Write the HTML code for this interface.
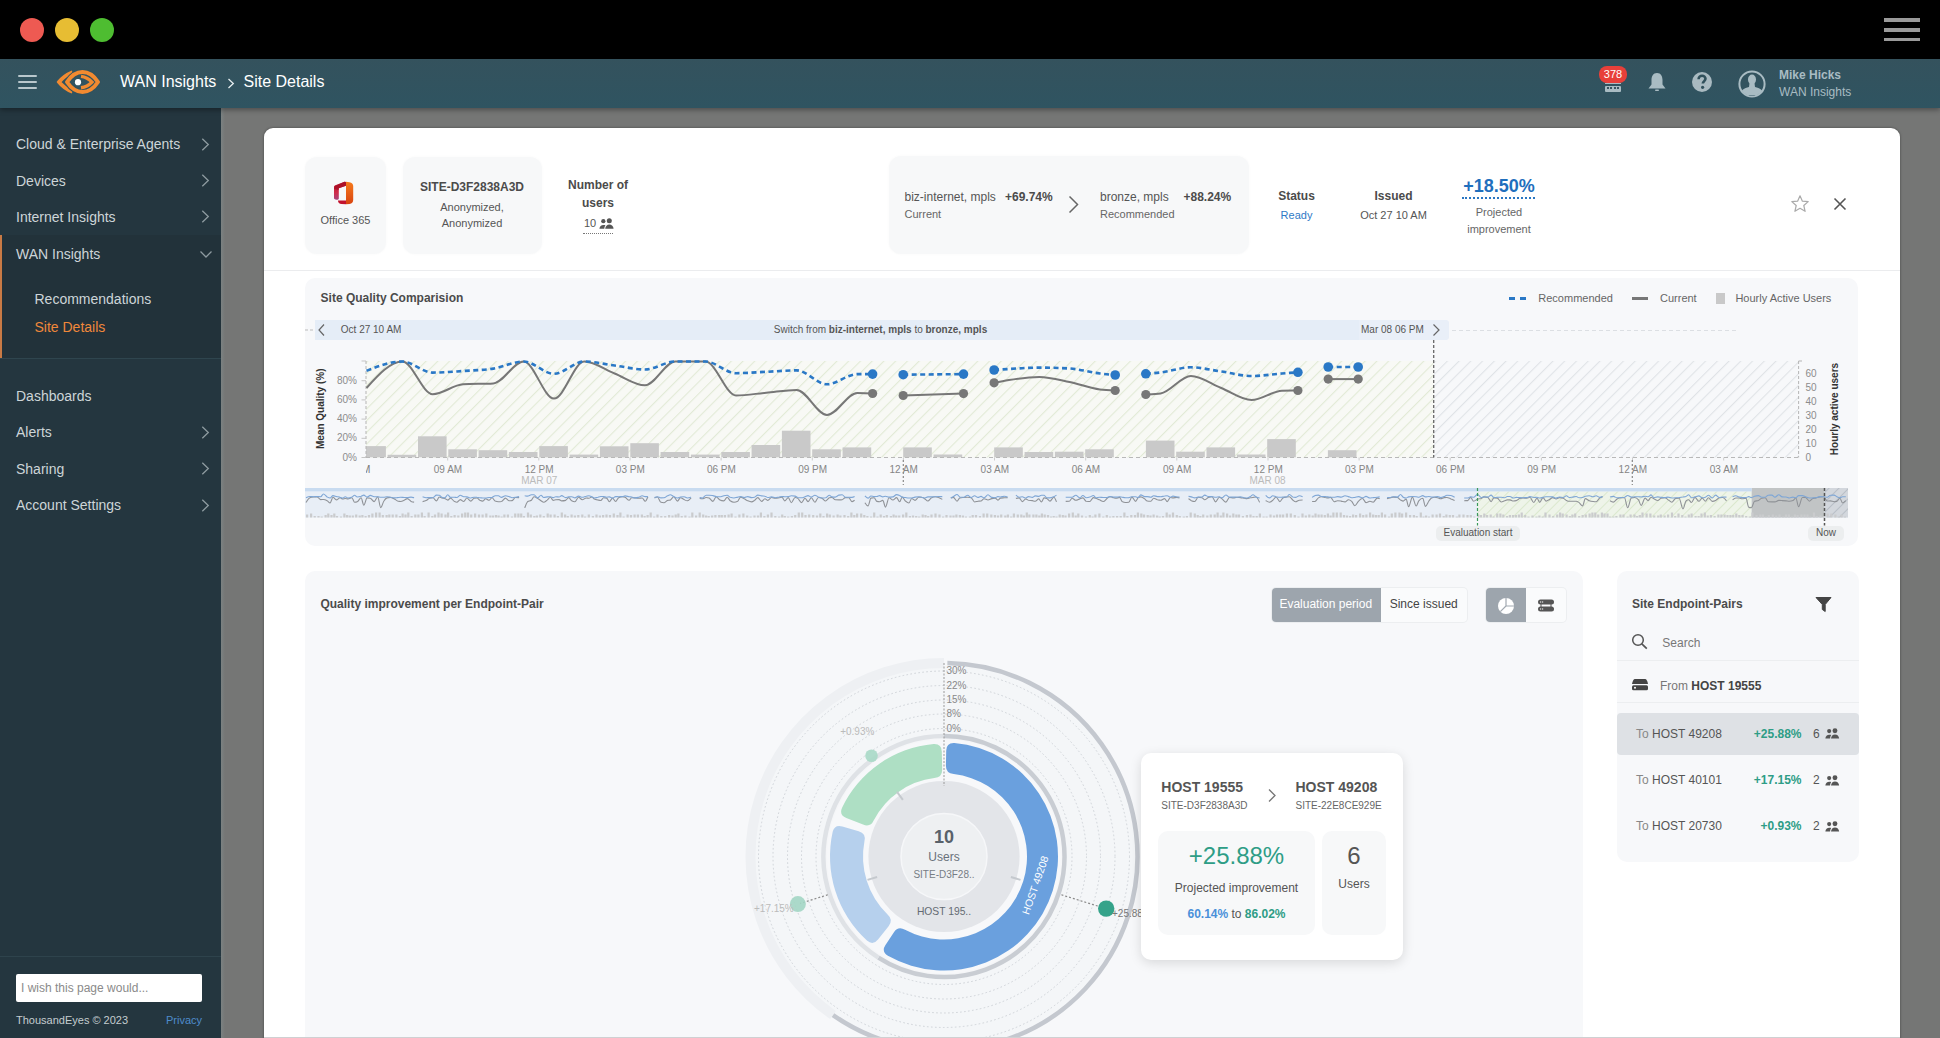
<!DOCTYPE html>
<html><head><meta charset="utf-8"><title>Site Details</title>
<style>
*{box-sizing:border-box;margin:0;padding:0}
html,body{width:1940px;height:1038px;overflow:hidden;background:#767676;font-family:"Liberation Sans",sans-serif}
.abs{position:absolute}
.t{position:absolute;white-space:nowrap}
svg{position:absolute;overflow:visible}
</style></head>
<body>
<div class="abs" style="left:0px;top:0px;width:1940px;height:59px;background:#000;"></div>
<div class="abs" style="left:20px;top:18px;width:24px;height:24px;background:#ee5a52;border-radius:50%;"></div>
<div class="abs" style="left:55px;top:18px;width:24px;height:24px;background:#e7bd33;border-radius:50%;"></div>
<div class="abs" style="left:90px;top:18px;width:24px;height:24px;background:#4ebd31;border-radius:50%;"></div>
<div class="abs" style="left:1884px;top:18.3px;width:36px;height:3.7px;background:#9a9a9a;"></div>
<div class="abs" style="left:1884px;top:28px;width:36px;height:3.7px;background:#9a9a9a;"></div>
<div class="abs" style="left:1884px;top:37.8px;width:36px;height:3.7px;background:#9a9a9a;"></div>
<div class="abs" style="left:0px;top:59px;width:1940px;height:49px;background:linear-gradient(#34525d,#2f5461);box-shadow:0 2px 5px rgba(0,0,0,.35);z-index:3;"></div>
<div class="abs" style="left:0;top:59px;width:1940px;height:49px;z-index:4">
<div class="abs" style="left:18px;top:16px;width:19px;height:2.4px;background:#b9c7cc;border-radius:1px;"></div>
<div class="abs" style="left:18px;top:22px;width:19px;height:2.4px;background:#b9c7cc;border-radius:1px;"></div>
<div class="abs" style="left:18px;top:28px;width:19px;height:2.4px;background:#b9c7cc;border-radius:1px;"></div>
<svg style="left:54px;top:8px" width="50" height="32" viewBox="0 0 50 32">
<path d="M18.5,5.2 C13,7.5 8.5,10.5 5,15 C8.5,19.5 13,22.5 18.5,24.8" fill="none" stroke="#f28a30" stroke-width="3.8" stroke-linecap="butt"/>
<path d="M13,15 C18,7.5 23.5,5 28.5,5 C33.5,5 39,7.5 44,15 C39,22.5 33.5,25 28.5,25 C23.5,25 18,22.5 13,15 Z" fill="none" stroke="#31525e" stroke-width="6" stroke-linejoin="round"/>
<path d="M13,15 C18,7.5 23.5,5 28.5,5 C33.5,5 39,7.5 44,15 C39,22.5 33.5,25 28.5,25 C23.5,25 18,22.5 13,15 Z" fill="none" stroke="#f28a30" stroke-width="4" stroke-linejoin="round"/>
<path d="M27,9.4 C31.5,10 35,12 38,15.1 C35,18.2 31.5,20.2 27,20.8" fill="none" stroke="#f28a30" stroke-width="3.4" stroke-linecap="butt"/>
<circle cx="24" cy="15.2" r="3.1" fill="#fff"/>
</svg>
<div class="t" style="left:120.0px;top:14.8px;font-size:16px;line-height:16px;color:#fff;">WAN Insights</div>
<svg style="left:227px;top:18.5px" width="9" height="11" viewBox="0 0 9 11"><path d="M1.5,1 L6.3,5.5 L1.5,10" fill="none" stroke="#e6eef0" stroke-width="1.3"/></svg>
<div class="t" style="left:243.5px;top:14.8px;font-size:16px;line-height:16px;color:#fff;">Site Details</div>
<div class="abs" style="left:1599px;top:7px;width:28px;height:16.5px;background:#e8403a;border-radius:8px;"></div>
<div class="t" style="left:1213.0px;width:800px;text-align:center;top:10.2px;font-size:11px;line-height:11px;color:#fff;">378</div>
<div class="abs" style="left:1605px;top:23.5px;width:16px;height:1px;background:#a9bcc3;"></div>
<div class="abs" style="left:1605px;top:26.5px;width:16px;height:6px;background:#a9bcc3;border-radius:1px;"></div>
<div class="abs" style="left:1607px;top:28px;width:12px;height:2px;border-top:2px dotted #3a5560"></div>
<svg style="left:1647px;top:13px" width="20" height="20" viewBox="0 0 20 20">
<path d="M10,1 C6,1 4.5,4.5 4.5,8 L4.5,12.5 L1.5,16.5 L18.5,16.5 L15.5,12.5 L15.5,8 C15.5,4.5 14,1 10,1 Z" fill="#a9bcc3"/>
<rect x="8" y="17.5" width="4" height="1.6" rx="0.8" fill="#a9bcc3"/>
</svg>
<svg style="left:1691px;top:12px" width="22" height="22" viewBox="0 0 22 22">
<circle cx="11" cy="11" r="10" fill="#a9bac1"/>
<path d="M7.6,8.2 C7.6,5.9 9.2,4.8 11.1,4.8 C13.1,4.8 14.5,6 14.5,7.8 C14.5,9.9 11.8,10.3 11.8,12.6" fill="none" stroke="#30505b" stroke-width="2.6"/>
<circle cx="11.6" cy="16.3" r="1.6" fill="#30505b"/>
</svg>
<svg style="left:1737px;top:10px" width="30" height="30" viewBox="0 0 30 30">
<defs><clipPath id="avc"><circle cx="15" cy="15" r="12"/></clipPath></defs>
<circle cx="15" cy="15" r="12.6" fill="none" stroke="#a9bcc3" stroke-width="2"/>
<g clip-path="url(#avc)" fill="#a9bcc3"><ellipse cx="15" cy="10.5" rx="4" ry="5"/><path d="M12.5,14 L17.5,14 L18,18 C23,19 26,21 27,26 L3,26 C4,21 7,19 12,18 Z"/></g>
</svg>
<div class="t" style="left:1779.0px;top:9.8px;font-size:12px;line-height:12px;color:#a9bcc3;font-weight:700;">Mike Hicks</div>
<div class="t" style="left:1779.0px;top:26.8px;font-size:12px;line-height:12px;color:#a9bcc3;">WAN Insights</div>
</div>
<div class="abs" style="left:0px;top:108px;width:221px;height:930px;background:#24363f;"></div>
<div class="abs" style="left:0px;top:235px;width:221px;height:123px;background:#22323a;"></div>
<div class="abs" style="left:0px;top:235px;width:2px;height:123px;background:#c97a45;"></div>
<div class="abs" style="left:0px;top:358px;width:221px;height:1.3px;background:#2f454e;"></div>
<div class="t" style="left:16.0px;top:137.4px;font-size:14px;line-height:14px;color:#cdd5d8;">Cloud &amp; Enterprise Agents</div>
<svg style="left:200.5px;top:137.8px" width="9" height="13" viewBox="0 0 9 13"><path d="M1.3,0.8 L7.3,6.5 L1.3,12.2" fill="none" stroke="#8e9ba0" stroke-width="1.3"/></svg>
<div class="t" style="left:16.0px;top:173.8px;font-size:14px;line-height:14px;color:#cdd5d8;">Devices</div>
<svg style="left:200.5px;top:174.2px" width="9" height="13" viewBox="0 0 9 13"><path d="M1.3,0.8 L7.3,6.5 L1.3,12.2" fill="none" stroke="#8e9ba0" stroke-width="1.3"/></svg>
<div class="t" style="left:16.0px;top:209.9px;font-size:14px;line-height:14px;color:#cdd5d8;">Internet Insights</div>
<svg style="left:200.5px;top:210.3px" width="9" height="13" viewBox="0 0 9 13"><path d="M1.3,0.8 L7.3,6.5 L1.3,12.2" fill="none" stroke="#8e9ba0" stroke-width="1.3"/></svg>
<div class="t" style="left:16.0px;top:246.6px;font-size:14px;line-height:14px;color:#cdd5d8;">WAN Insights</div>
<svg style="left:198.5px;top:249.5px" width="14" height="9" viewBox="0 0 14 9"><path d="M1.5,1.5 L7,7 L12.5,1.5" fill="none" stroke="#8e9ba0" stroke-width="1.3"/></svg>
<div class="t" style="left:34.5px;top:291.8px;font-size:14px;line-height:14px;color:#cdd5d8;">Recommendations</div>
<div class="t" style="left:34.5px;top:320.4px;font-size:14px;line-height:14px;color:#f0883a;">Site Details</div>
<div class="t" style="left:16.0px;top:388.9px;font-size:14px;line-height:14px;color:#cdd5d8;">Dashboards</div>
<div class="t" style="left:16.0px;top:425.3px;font-size:14px;line-height:14px;color:#cdd5d8;">Alerts</div>
<svg style="left:200.5px;top:425.7px" width="9" height="13" viewBox="0 0 9 13"><path d="M1.3,0.8 L7.3,6.5 L1.3,12.2" fill="none" stroke="#8e9ba0" stroke-width="1.3"/></svg>
<div class="t" style="left:16.0px;top:462.0px;font-size:14px;line-height:14px;color:#cdd5d8;">Sharing</div>
<svg style="left:200.5px;top:462.4px" width="9" height="13" viewBox="0 0 9 13"><path d="M1.3,0.8 L7.3,6.5 L1.3,12.2" fill="none" stroke="#8e9ba0" stroke-width="1.3"/></svg>
<div class="t" style="left:16.0px;top:498.4px;font-size:14px;line-height:14px;color:#cdd5d8;">Account Settings</div>
<svg style="left:200.5px;top:498.8px" width="9" height="13" viewBox="0 0 9 13"><path d="M1.3,0.8 L7.3,6.5 L1.3,12.2" fill="none" stroke="#8e9ba0" stroke-width="1.3"/></svg>
<div class="abs" style="left:0px;top:956px;width:221px;height:1px;background:#2e434c;"></div>
<div class="abs" style="left:16px;top:974px;width:186px;height:28px;background:#fff;border-radius:2px;"></div>
<div class="t" style="left:21.0px;top:981.8px;font-size:12px;line-height:12px;color:#8a8a8a;">I wish this page would...</div>
<div class="t" style="left:16.0px;top:1014.7px;font-size:11px;line-height:11px;color:#c5cdd0;">ThousandEyes © 2023</div>
<div class="t" style="left:-598.0px;width:800px;text-align:right;top:1014.7px;font-size:11px;line-height:11px;color:#4e8ccc;">Privacy</div>
<div class="abs" style="left:221px;top:108px;width:1719px;height:930px;background:#757675;"></div>
<div class="abs" style="left:221px;top:108px;width:4px;height:930px;background:linear-gradient(90deg,#7b8282,#757675);"></div>
<div class="abs" style="left:264px;top:127.6px;width:1636px;height:920px;background:#fff;border-radius:9px;box-shadow:0 0 2.5px rgba(0,0,0,.45);"></div>
<div class="abs" style="left:264px;top:269.5px;width:1636px;height:1px;background:#ebecee;"></div>
<div class="abs" style="left:264px;top:1036.5px;width:1636px;height:1.5px;background:#cfd0d2;z-index:5;"></div>
<div class="abs" style="left:305px;top:156.5px;width:81px;height:97px;background:#f7f8f9;border-radius:12px;box-shadow:0 0 3px rgba(0,0,0,.03);"></div>
<svg style="left:326px;top:176px" width="36" height="34" viewBox="0 0 36 34">
<defs><linearGradient id="ogr" x1="0" y1="0" x2="0" y2="1"><stop offset="0" stop-color="#f57a1c"/><stop offset="1" stop-color="#d94410"/></linearGradient>
<linearGradient id="ogl" x1="0" y1="0" x2="0" y2="1"><stop offset="0" stop-color="#b5112c"/><stop offset=".6" stop-color="#d02c4a"/><stop offset="1" stop-color="#a8447e"/></linearGradient></defs>
<path d="M8,11 C8,10.2 8.6,9.6 9.4,9.2 L18.5,5.8 C19.2,5.6 20,5.8 20,6.4 L20,9.8 L12.8,12.2 L12.8,22.5 C12.8,23.3 11.5,24.2 9.5,23.6 C8.6,23.3 8,22.8 8,22 Z" fill="url(#ogl)"/>
<path d="M8.5,10.2 L18.5,5.8 C19.2,5.6 20,5.8 20,6.4 L20,9.8 L12.8,12.2 L12.6,14 L8.2,13 Z" fill="#a90f26" opacity=".85"/>
<path d="M20,5.8 L23.5,6.2 C25.8,6.5 27.2,8 27.2,10 L27.2,24 C27.2,26.3 25.8,27.8 23.5,28 L20,28.2 Z" fill="url(#ogr)"/>
<path d="M12,24.4 L20,24.4 L20,28.2 L15.5,28 C13.3,27.8 12,26.5 12,24.4 Z" fill="#c2122e"/>
</svg>
<div class="t" style="left:-54.5px;width:800px;text-align:center;top:214.7px;font-size:11px;line-height:11px;color:#555;">Office 365</div>
<div class="abs" style="left:403px;top:156.5px;width:139px;height:97px;background:#f7f8f9;border-radius:12px;box-shadow:0 0 3px rgba(0,0,0,.03);"></div>
<div class="t" style="left:72.0px;width:800px;text-align:center;top:181.3px;font-size:12px;line-height:12px;color:#4b4b4b;font-weight:700;">SITE-D3F2838A3D</div>
<div class="t" style="left:72.0px;width:800px;text-align:center;top:201.7px;font-size:11px;line-height:11px;color:#555;">Anonymized,</div>
<div class="t" style="left:72.0px;width:800px;text-align:center;top:217.9px;font-size:11px;line-height:11px;color:#555;">Anonymized</div>
<div class="t" style="left:198.0px;width:800px;text-align:center;top:179.1px;font-size:12px;line-height:12px;color:#4b4b4b;font-weight:700;">Number of</div>
<div class="t" style="left:198.0px;width:800px;text-align:center;top:197.2px;font-size:12px;line-height:12px;color:#4b4b4b;font-weight:700;">users</div>
<div class="t" style="left:584.0px;top:217.9px;font-size:11px;line-height:11px;color:#555;">10</div>
<svg style="left:598.5px;top:217.5px" width="15.0" height="11.2" viewBox="0 0 16 12">
<circle cx="4.6" cy="3.4" r="2.3" fill="#555"/><circle cx="11" cy="3" r="2.7" fill="#555"/>
<path d="M0.4,11.6 C0.6,9 2.3,7.4 4.8,7.4 C5.6,7.4 6.3,7.5 6.9,7.8 C6.1,8.8 5.7,10.1 5.6,11.6 Z" fill="#555"/>
<path d="M6.6,11.6 C6.8,8.9 8.6,7.1 11,7.1 C13.5,7.1 15.4,8.9 15.6,11.6 Z" fill="#555"/>
</svg>
<div class="abs" style="left:583px;top:232.5px;width:30px;height:1px;border-top:1px dotted #777"></div>
<div class="abs" style="left:888.5px;top:156px;width:360px;height:98px;background:#f7f8f9;border-radius:12px;box-shadow:0 0 3px rgba(0,0,0,.03);"></div>
<div class="t" style="left:904.5px;top:191.1px;font-size:12px;line-height:12px;color:#555;">biz-internet, mpls</div>
<div class="t" style="left:1005.0px;top:191.1px;font-size:12px;line-height:12px;color:#4b4b4b;font-weight:700;">+69.74%</div>
<div class="t" style="left:904.5px;top:208.5px;font-size:11px;line-height:11px;color:#666;">Current</div>
<svg style="left:1067px;top:195px" width="13" height="19" viewBox="0 0 13 19"><path d="M2.5,1.5 L10.5,9.5 L2.5,17.5" fill="none" stroke="#666" stroke-width="1.5"/></svg>
<div class="t" style="left:1100.0px;top:191.1px;font-size:12px;line-height:12px;color:#555;">bronze, mpls</div>
<div class="t" style="left:1183.5px;top:191.1px;font-size:12px;line-height:12px;color:#4b4b4b;font-weight:700;">+88.24%</div>
<div class="t" style="left:1100.0px;top:208.5px;font-size:11px;line-height:11px;color:#666;">Recommended</div>
<div class="t" style="left:896.5px;width:800px;text-align:center;top:190.1px;font-size:12px;line-height:12px;color:#4b4b4b;font-weight:700;">Status</div>
<div class="t" style="left:896.5px;width:800px;text-align:center;top:209.6px;font-size:11px;line-height:11px;color:#2f7ac6;">Ready</div>
<div class="t" style="left:993.5px;width:800px;text-align:center;top:190.1px;font-size:12px;line-height:12px;color:#4b4b4b;font-weight:700;">Issued</div>
<div class="t" style="left:993.5px;width:800px;text-align:center;top:209.6px;font-size:11px;line-height:11px;color:#555;">Oct 27 10 AM</div>
<div class="t" style="left:1099.0px;width:800px;text-align:center;top:176.7px;font-size:18px;line-height:18px;color:#1f6fbd;font-weight:700;">+18.50%</div>
<div class="abs" style="left:1462px;top:196.5px;width:73px;height:2px;border-top:2px dotted #2a76c2"></div>
<div class="t" style="left:1099.0px;width:800px;text-align:center;top:207.1px;font-size:11px;line-height:11px;color:#666;">Projected</div>
<div class="t" style="left:1099.0px;width:800px;text-align:center;top:223.6px;font-size:11px;line-height:11px;color:#666;">improvement</div>
<svg style="left:1790px;top:194px" width="20" height="20" viewBox="0 0 20 20"><path d="M10,1.8 L12.4,7.2 L18.2,7.6 L13.8,11.5 L15.1,17.3 L10,14.3 L4.9,17.3 L6.2,11.5 L1.8,7.6 L7.6,7.2 Z" fill="none" stroke="#aaa" stroke-width="1.2" stroke-linejoin="round"/></svg>
<svg style="left:1833px;top:197px" width="14" height="14" viewBox="0 0 14 14"><path d="M1.5,1.5 L12.5,12.5 M12.5,1.5 L1.5,12.5" stroke="#555" stroke-width="1.6"/></svg>
<div class="abs" style="left:305px;top:277.5px;width:1553px;height:268.5px;background:#f7f8fa;border-radius:10px;"></div>
<div class="t" style="left:320.6px;top:291.8px;font-size:12px;line-height:12px;color:#4b4b4b;font-weight:700;">Site Quality Comparision</div>
<div class="abs" style="left:1509px;top:297px;width:6px;height:3px;background:#2a78c6;"></div>
<div class="abs" style="left:1519.5px;top:297px;width:6px;height:3px;background:#2a78c6;"></div>
<div class="abs" style="left:1632px;top:297px;width:16px;height:2.5px;background:#777;"></div>
<div class="abs" style="left:1716px;top:292.5px;width:8.5px;height:11.5px;background:#c9c9c9;"></div>
<div class="t" style="left:1538.3px;top:293.0px;font-size:11px;line-height:11px;color:#666;">Recommended</div>
<div class="t" style="left:1660.0px;top:293.0px;font-size:11px;line-height:11px;color:#666;">Current</div>
<div class="t" style="left:1735.4px;top:293.0px;font-size:11px;line-height:11px;color:#666;">Hourly Active Users</div>
<div class="abs" style="left:315px;top:320px;width:1134px;height:20px;background:#e5edf7;border-radius:0 4px 4px 0;"></div>
<div class="abs" style="left:1358.6px;top:320px;width:90.4px;height:20px;background:#e9eff8;border-radius:0 4px 4px 0;"></div>
<div class="t" style="left:340.8px;top:325.1px;font-size:10px;line-height:10px;color:#555;">Oct 27 10 AM</div>
<div class="t" style="left:773.8px;top:325.1px;font-size:10px;line-height:10px;color:#555;">Switch from <b>biz-internet, mpls</b> to <b>bronze, mpls</b></div>
<div class="t" style="left:1361.0px;top:325.1px;font-size:10px;line-height:10px;color:#555;">Mar 08 06 PM</div>
<svg style="left:0;top:0" width="1940" height="1038" viewBox="0 0 1940 1038"><defs>
<pattern id="hg" patternUnits="userSpaceOnUse" width="8.3" height="8.3" patternTransform="rotate(45)"><rect width="8.3" height="8.3" fill="#f8f9f5"/><line x1="0" y1="0" x2="0" y2="8.3" stroke="#e2eAd6" stroke-width="2.2"/></pattern>
<pattern id="hgr" patternUnits="userSpaceOnUse" width="8.3" height="8.3" patternTransform="rotate(45)"><rect width="8.3" height="8.3" fill="#f7f8fa"/><line x1="0" y1="0" x2="0" y2="8.3" stroke="#e0e3e7" stroke-width="2.2"/></pattern>
<pattern id="hgm" patternUnits="userSpaceOnUse" width="7" height="7" patternTransform="rotate(45)"><rect width="7" height="7" fill="#eef4e9"/><line x1="0" y1="0" x2="0" y2="7" stroke="#d6e6c8" stroke-width="1.6"/></pattern>
<pattern id="hgrm" patternUnits="userSpaceOnUse" width="7" height="7" patternTransform="rotate(45)"><rect width="7" height="7" fill="#d3d7dd"/><line x1="0" y1="0" x2="0" y2="7" stroke="#b3b9c2" stroke-width="1.6"/></pattern>
<clipPath id="pc"><rect x="366" y="355" width="1434" height="110"/></clipPath>
<clipPath id="lc"><rect x="366" y="455" width="1500" height="30"/></clipPath>
</defs><line x1="305" y1="330" x2="313" y2="330" stroke="#bbb" stroke-width="1" stroke-dasharray="3,2"/><path d="M324,324.5 L319,330 L324,335.5" fill="none" stroke="#666" stroke-width="1.2"/><path d="M1433.5,324.5 L1439,330 L1433.5,335.5" fill="none" stroke="#666" stroke-width="1.2"/><line x1="1452" y1="330.5" x2="1736" y2="330.5" stroke="#dcdfe3" stroke-width="1" stroke-dasharray="4,3"/><rect x="366" y="361" width="1067.7" height="96.5" fill="url(#hg)"/><rect x="1433.7" y="361" width="365" height="96.5" fill="url(#hgr)"/><rect x="366.0" y="446.1" width="19.9" height="11.2" fill="#c9c9c9"/><rect x="387.6" y="454.8" width="28.6" height="2.5" fill="#c9c9c9"/><rect x="418.0" y="436.3" width="28.6" height="21.0" fill="#c9c9c9"/><rect x="448.3" y="449.3" width="28.6" height="8.0" fill="#c9c9c9"/><rect x="478.6" y="450.2" width="28.6" height="7.1" fill="#c9c9c9"/><rect x="508.9" y="452.0" width="28.6" height="5.3" fill="#c9c9c9"/><rect x="539.3" y="446.1" width="28.6" height="11.2" fill="#c9c9c9"/><rect x="569.6" y="454.6" width="28.6" height="2.7" fill="#c9c9c9"/><rect x="599.9" y="446.3" width="28.6" height="11.0" fill="#c9c9c9"/><rect x="630.3" y="443.2" width="28.6" height="14.1" fill="#c9c9c9"/><rect x="660.6" y="452.0" width="28.6" height="5.3" fill="#c9c9c9"/><rect x="690.9" y="454.6" width="28.6" height="2.7" fill="#c9c9c9"/><rect x="721.3" y="452.0" width="28.6" height="5.3" fill="#c9c9c9"/><rect x="751.6" y="445.0" width="28.6" height="12.3" fill="#c9c9c9"/><rect x="781.9" y="430.7" width="28.6" height="26.6" fill="#c9c9c9"/><rect x="812.2" y="449.3" width="28.6" height="8.0" fill="#c9c9c9"/><rect x="842.6" y="447.4" width="28.6" height="9.9" fill="#c9c9c9"/><rect x="903.2" y="447.4" width="28.6" height="9.9" fill="#c9c9c9"/><rect x="933.6" y="454.5" width="28.6" height="2.8" fill="#c9c9c9"/><rect x="994.2" y="447.4" width="28.6" height="9.9" fill="#c9c9c9"/><rect x="1024.6" y="452.0" width="28.6" height="5.3" fill="#c9c9c9"/><rect x="1054.9" y="451.7" width="28.6" height="5.6" fill="#c9c9c9"/><rect x="1085.2" y="449.3" width="28.6" height="8.0" fill="#c9c9c9"/><rect x="1145.9" y="440.6" width="28.6" height="16.7" fill="#c9c9c9"/><rect x="1176.2" y="451.7" width="28.6" height="5.6" fill="#c9c9c9"/><rect x="1206.5" y="447.4" width="28.6" height="9.9" fill="#c9c9c9"/><rect x="1236.9" y="454.5" width="28.6" height="2.8" fill="#c9c9c9"/><rect x="1267.2" y="439.1" width="28.6" height="18.2" fill="#c9c9c9"/><rect x="1327.9" y="450.2" width="28.6" height="7.1" fill="#c9c9c9"/><line x1="366" y1="361" x2="366" y2="457.5" stroke="#b5b5b5" stroke-width="1" stroke-dasharray="3,2"/><line x1="361.5" y1="361" x2="366" y2="361" stroke="#c5c5c5" stroke-width="1"/><line x1="361.5" y1="380.7" x2="366" y2="380.7" stroke="#c5c5c5" stroke-width="1"/><line x1="361.5" y1="399.9" x2="366" y2="399.9" stroke="#c5c5c5" stroke-width="1"/><line x1="361.5" y1="419.1" x2="366" y2="419.1" stroke="#c5c5c5" stroke-width="1"/><line x1="361.5" y1="438.3" x2="366" y2="438.3" stroke="#c5c5c5" stroke-width="1"/><line x1="361.5" y1="457.5" x2="366" y2="457.5" stroke="#c5c5c5" stroke-width="1"/><line x1="366" y1="457.5" x2="1799" y2="457.5" stroke="#b8b8b8" stroke-width="1" stroke-dasharray="4,3"/><line x1="1798.6" y1="361" x2="1798.6" y2="457.5" stroke="#b5b5b5" stroke-width="1" stroke-dasharray="3,2"/><line x1="1798.6" y1="361" x2="1802" y2="361" stroke="#b5b5b5" stroke-width="1"/><line x1="1433.7" y1="340" x2="1433.7" y2="457.5" stroke="#666" stroke-width="1.3" stroke-dasharray="3,2"/><line x1="447.7" y1="457.5" x2="447.7" y2="460.5" stroke="#ccc" stroke-width="1"/><line x1="538.8" y1="457.5" x2="538.8" y2="460.5" stroke="#ccc" stroke-width="1"/><line x1="630.0" y1="457.5" x2="630.0" y2="460.5" stroke="#ccc" stroke-width="1"/><line x1="721.1" y1="457.5" x2="721.1" y2="460.5" stroke="#ccc" stroke-width="1"/><line x1="812.3" y1="457.5" x2="812.3" y2="460.5" stroke="#ccc" stroke-width="1"/><line x1="903.4" y1="457.5" x2="903.4" y2="460.5" stroke="#ccc" stroke-width="1"/><line x1="994.5" y1="457.5" x2="994.5" y2="460.5" stroke="#ccc" stroke-width="1"/><line x1="1085.7" y1="457.5" x2="1085.7" y2="460.5" stroke="#ccc" stroke-width="1"/><line x1="1176.8" y1="457.5" x2="1176.8" y2="460.5" stroke="#ccc" stroke-width="1"/><line x1="1268.0" y1="457.5" x2="1268.0" y2="460.5" stroke="#ccc" stroke-width="1"/><line x1="1359.1" y1="457.5" x2="1359.1" y2="460.5" stroke="#ccc" stroke-width="1"/><line x1="1450.2" y1="457.5" x2="1450.2" y2="460.5" stroke="#ccc" stroke-width="1"/><line x1="1541.4" y1="457.5" x2="1541.4" y2="460.5" stroke="#ccc" stroke-width="1"/><line x1="1632.5" y1="457.5" x2="1632.5" y2="460.5" stroke="#ccc" stroke-width="1"/><line x1="1723.7" y1="457.5" x2="1723.7" y2="460.5" stroke="#ccc" stroke-width="1"/><line x1="903.3" y1="460" x2="903.3" y2="485" stroke="#888" stroke-width="1.2" stroke-dasharray="2,2"/><line x1="1632.3" y1="460" x2="1632.3" y2="485" stroke="#888" stroke-width="1.2" stroke-dasharray="2,2"/><g clip-path="url(#pc)"><path d="M366.5,388.0C378.4,374.8 390.4,361.5 402.3,361.5C412.4,361.5 422.5,394.2 432.7,394.2C442.8,394.2 452.9,384.9 463.0,384.3C473.1,383.7 483.2,384.0 493.3,383.4C503.4,382.8 513.5,361.5 523.6,361.5C533.8,361.5 543.9,398.6 554.0,398.6C564.1,398.6 574.2,361.5 584.3,361.5C594.4,361.5 604.5,369.5 614.6,373.5C624.8,377.5 634.9,385.3 645.0,385.3C655.1,385.3 665.2,361.5 675.3,361.5C685.4,361.5 695.5,361.5 705.6,361.5C715.7,361.5 725.9,395.5 736.0,395.5C746.1,395.5 756.2,393.6 766.3,392.7C776.4,391.8 786.5,389.9 796.6,389.9C806.7,389.9 816.8,415.0 827.0,415.0C837.1,415.0 847.2,393.0 857.3,393.0C862.4,393.0 867.5,393.2 872.6,393.5" fill="none" stroke="#777" stroke-width="2"/><path d="M903.2,395.5C913.3,395.2 923.4,394.8 933.5,394.5C943.5,394.2 953.5,393.9 963.5,393.6" fill="none" stroke="#777" stroke-width="2"/><path d="M994.1,382.8C999.0,381.8 1004.0,380.8 1008.9,380.0C1019.0,378.4 1029.2,376.9 1039.3,376.9C1049.4,376.9 1059.5,379.9 1069.6,382.0C1079.7,384.1 1089.8,388.2 1099.9,389.5C1105.0,390.1 1110.1,390.3 1115.2,390.5" fill="none" stroke="#777" stroke-width="2"/><path d="M1145.8,394.5C1150.7,394.3 1155.7,394.2 1160.6,393.5C1170.7,392.1 1180.8,376.0 1190.9,376.0C1201.0,376.0 1211.1,384.0 1221.2,388.0C1231.3,392.0 1241.5,400.1 1251.6,400.1C1261.7,400.1 1271.8,391.2 1281.9,390.8C1287.2,390.6 1292.6,390.6 1297.9,390.5" fill="none" stroke="#777" stroke-width="2"/><path d="M1328.2,379.1L1358.2,379.1" fill="none" stroke="#777" stroke-width="2"/><path d="M366.5,370.8C378.4,366.1 390.4,361.5 402.3,361.5C412.4,361.5 422.5,372.6 432.7,372.6C442.8,372.6 452.9,371.7 463.0,371.0C473.1,370.3 483.2,370.2 493.3,368.6C503.4,367.0 513.5,361.5 523.6,361.5C533.8,361.5 543.9,373.8 554.0,373.8C564.1,373.8 574.2,361.5 584.3,361.5C594.4,361.5 604.5,364.2 614.6,365.5C624.8,366.8 634.9,369.5 645.0,369.5C655.1,369.5 665.2,361.5 675.3,361.5C685.4,361.5 695.5,361.5 705.6,361.5C715.7,361.5 725.9,373.2 736.0,373.2C746.1,373.2 756.2,372.3 766.3,371.8C776.4,371.3 786.5,370.4 796.6,370.4C806.7,370.4 816.8,384.3 827.0,384.3C837.1,384.3 847.2,374.1 857.3,374.1C862.4,374.1 867.5,374.1 872.6,374.1" fill="none" stroke="#2a78c6" stroke-width="2.6" stroke-dasharray="5,3.5"/><path d="M903.2,374.7C913.3,374.6 923.4,374.5 933.5,374.4C943.5,374.3 953.5,374.2 963.5,374.1" fill="none" stroke="#2a78c6" stroke-width="2.6" stroke-dasharray="5,3.5"/><path d="M994.1,370.0C999.0,369.6 1004.0,369.3 1008.9,369.0C1019.0,368.4 1029.2,367.6 1039.3,367.6C1049.4,367.6 1059.5,367.9 1069.6,368.5C1079.7,369.1 1089.8,372.3 1099.9,373.5C1105.0,374.1 1110.1,374.6 1115.2,375.0" fill="none" stroke="#2a78c6" stroke-width="2.6" stroke-dasharray="5,3.5"/><path d="M1145.8,373.8C1150.7,373.4 1155.7,373.1 1160.6,372.5C1170.7,371.3 1180.8,367.3 1190.9,367.3C1201.0,367.3 1211.1,370.1 1221.2,371.5C1231.3,372.9 1241.5,376.0 1251.6,376.0C1261.7,376.0 1271.8,374.3 1281.9,373.5C1287.2,373.1 1292.6,372.7 1297.9,372.3" fill="none" stroke="#2a78c6" stroke-width="2.6" stroke-dasharray="5,3.5"/><path d="M1328.2,367.0L1358.2,367.0" fill="none" stroke="#2a78c6" stroke-width="2.6" stroke-dasharray="5,3.5"/></g><circle cx="903.2" cy="395.5" r="4.6" fill="#777"/><circle cx="963.5" cy="393.6" r="4.6" fill="#777"/><circle cx="994.1" cy="382.8" r="4.6" fill="#777"/><circle cx="1115.2" cy="390.5" r="4.6" fill="#777"/><circle cx="1145.8" cy="394.5" r="4.6" fill="#777"/><circle cx="1297.9" cy="390.5" r="4.6" fill="#777"/><circle cx="1328.2" cy="379.1" r="4.6" fill="#777"/><circle cx="1358.2" cy="379.1" r="4.6" fill="#777"/><circle cx="872.6" cy="393.5" r="4.6" fill="#777"/><circle cx="903.2" cy="374.7" r="4.8" fill="#2a78c6"/><circle cx="963.5" cy="374.1" r="4.8" fill="#2a78c6"/><circle cx="994.1" cy="370" r="4.8" fill="#2a78c6"/><circle cx="1115.2" cy="375" r="4.8" fill="#2a78c6"/><circle cx="1145.8" cy="373.8" r="4.8" fill="#2a78c6"/><circle cx="1297.9" cy="372.3" r="4.8" fill="#2a78c6"/><circle cx="1328.2" cy="367" r="4.8" fill="#2a78c6"/><circle cx="1358.2" cy="367" r="4.8" fill="#2a78c6"/><circle cx="872.6" cy="374.1" r="4.8" fill="#2a78c6"/><rect x="305" y="488" width="1543" height="29.5" fill="#e8eef6"/><rect x="1477.5" y="491.5" width="274.2" height="26" fill="url(#hgm)"/><rect x="1751.7" y="488" width="73" height="29.5" fill="#c1c4c5"/><rect x="1824.7" y="488" width="23.3" height="29.5" fill="url(#hgrm)"/><rect x="305" y="488" width="1446.7" height="3.3" fill="#c8dbf0"/><path d="M306.0,517.5v-3h2.2v3zM310.0,517.5v-4h2.2v4zM313.6,517.5v-1.5h2.2v1.5zM317.4,517.5v-1.5h2.2v1.5zM320.6,517.5v-1h2.2v1zM324.5,517.5v-2.5h2.2v2.5zM327.2,517.5v-4h2.2v4zM330.4,517.5v-2.5h2.2v2.5zM333.2,517.5v-4h2.2v4zM335.9,517.5v-1.5h2.2v1.5zM339.9,517.5v-1h2.2v1zM343.3,517.5v-4h2.2v4zM346.0,517.5v-2.5h2.2v2.5zM348.7,517.5v-2h2.2v2zM351.7,517.5v-2h2.2v2zM355.1,517.5v-3h2.2v3zM358.6,517.5v-2h2.2v2zM361.3,517.5v-2.5h2.2v2.5zM364.5,517.5v-1.5h2.2v1.5zM367.9,517.5v-2.5h2.2v2.5zM371.3,517.5v-4h2.2v4zM375.0,517.5v-5h2.2v5zM378.5,517.5v-5h2.2v5zM381.7,517.5v-2.5h2.2v2.5zM385.5,517.5v-2.5h2.2v2.5zM388.2,517.5v-3h2.2v3zM391.6,517.5v-3h2.2v3zM395.3,517.5v-3h2.2v3zM398.8,517.5v-1.5h2.2v1.5zM401.5,517.5v-4h2.2v4zM404.4,517.5v-3h2.2v3zM407.2,517.5v-5h2.2v5zM410.5,517.5v-1.5h2.2v1.5zM414.2,517.5v-3h2.2v3zM417.3,517.5v-3h2.2v3zM420.8,517.5v-5h2.2v5zM423.5,517.5v-1.5h2.2v1.5zM427.5,517.5v-5h2.2v5zM431.2,517.5v-1.5h2.2v1.5zM433.9,517.5v-3h2.2v3zM437.4,517.5v-5h2.2v5zM440.5,517.5v-4h2.2v4zM444.4,517.5v-3h2.2v3zM447.0,517.5v-5h2.2v5zM450.2,517.5v-1.5h2.2v1.5zM453.5,517.5v-2.5h2.2v2.5zM457.2,517.5v-2h2.2v2zM461.0,517.5v-4h2.2v4zM464.1,517.5v-5h2.2v5zM466.9,517.5v-5h2.2v5zM470.1,517.5v-3h2.2v3zM474.0,517.5v-4h2.2v4zM477.9,517.5v-3h2.2v3zM481.5,517.5v-3h2.2v3zM485.2,517.5v-4h2.2v4zM489.2,517.5v-2h2.2v2zM491.9,517.5v-2h2.2v2zM494.9,517.5v-2.5h2.2v2.5zM497.5,517.5v-2h2.2v2zM500.5,517.5v-1h2.2v1zM503.3,517.5v-3h2.2v3zM506.8,517.5v-3h2.2v3zM510.9,517.5v-1h2.2v1zM514.1,517.5v-4h2.2v4zM517.3,517.5v-4h2.2v4zM520.1,517.5v-4h2.2v4zM522.8,517.5v-1.5h2.2v1.5zM526.9,517.5v-5h2.2v5zM529.7,517.5v-3h2.2v3zM533.2,517.5v-1.5h2.2v1.5zM535.8,517.5v-2h2.2v2zM539.2,517.5v-3h2.2v3zM542.7,517.5v-1.5h2.2v1.5zM546.6,517.5v-4h2.2v4zM549.5,517.5v-3h2.2v3zM553.5,517.5v-3h2.2v3zM556.8,517.5v-1.5h2.2v1.5zM560.7,517.5v-5h2.2v5zM564.0,517.5v-3h2.2v3zM566.7,517.5v-1.5h2.2v1.5zM570.5,517.5v-3h2.2v3zM573.8,517.5v-2h2.2v2zM577.2,517.5v-2.5h2.2v2.5zM581.2,517.5v-3h2.2v3zM584.0,517.5v-1h2.2v1zM587.7,517.5v-3h2.2v3zM591.8,517.5v-1.5h2.2v1.5zM595.4,517.5v-3h2.2v3zM598.8,517.5v-2h2.2v2zM602.0,517.5v-2.5h2.2v2.5zM605.4,517.5v-3h2.2v3zM608.9,517.5v-2.5h2.2v2.5zM612.7,517.5v-4h2.2v4zM616.4,517.5v-2.5h2.2v2.5zM619.3,517.5v-5h2.2v5zM622.5,517.5v-1h2.2v1zM626.5,517.5v-3h2.2v3zM629.9,517.5v-2.5h2.2v2.5zM633.5,517.5v-3h2.2v3zM636.8,517.5v-3h2.2v3zM640.8,517.5v-3h2.2v3zM643.5,517.5v-1.5h2.2v1.5zM646.5,517.5v-2.5h2.2v2.5zM649.6,517.5v-5h2.2v5zM653.1,517.5v-1h2.2v1zM656.4,517.5v-3h2.2v3zM660.2,517.5v-1.5h2.2v1.5zM664.1,517.5v-1.5h2.2v1.5zM668.0,517.5v-2.5h2.2v2.5zM671.4,517.5v-2h2.2v2zM674.6,517.5v-3h2.2v3zM677.3,517.5v-4h2.2v4zM680.6,517.5v-1.5h2.2v1.5zM684.3,517.5v-2h2.2v2zM688.4,517.5v-1h2.2v1zM691.2,517.5v-5h2.2v5zM695.0,517.5v-2h2.2v2zM698.6,517.5v-5h2.2v5zM702.1,517.5v-3h2.2v3zM705.0,517.5v-2h2.2v2zM707.6,517.5v-1.5h2.2v1.5zM711.0,517.5v-2h2.2v2zM714.3,517.5v-2.5h2.2v2.5zM718.1,517.5v-2.5h2.2v2.5zM720.7,517.5v-2.5h2.2v2.5zM723.8,517.5v-2.5h2.2v2.5zM727.5,517.5v-3h2.2v3zM730.5,517.5v-4h2.2v4zM734.4,517.5v-1h2.2v1zM738.3,517.5v-3h2.2v3zM742.3,517.5v-4h2.2v4zM746.1,517.5v-2h2.2v2zM749.5,517.5v-1h2.2v1zM753.4,517.5v-2h2.2v2zM756.9,517.5v-2h2.2v2zM759.8,517.5v-5h2.2v5zM763.3,517.5v-1.5h2.2v1.5zM766.8,517.5v-3h2.2v3zM770.4,517.5v-5h2.2v5zM774.2,517.5v-1.5h2.2v1.5zM778.1,517.5v-1h2.2v1zM781.1,517.5v-3h2.2v3zM783.7,517.5v-1.5h2.2v1.5zM787.1,517.5v-1h2.2v1zM790.8,517.5v-1.5h2.2v1.5zM794.1,517.5v-2.5h2.2v2.5zM797.7,517.5v-5h2.2v5zM801.1,517.5v-5h2.2v5zM804.4,517.5v-2.5h2.2v2.5zM808.1,517.5v-3h2.2v3zM812.1,517.5v-2.5h2.2v2.5zM815.9,517.5v-2h2.2v2zM819.2,517.5v-4h2.2v4zM822.4,517.5v-1.5h2.2v1.5zM826.0,517.5v-4h2.2v4zM828.7,517.5v-3h2.2v3zM832.5,517.5v-2h2.2v2zM836.5,517.5v-3h2.2v3zM839.3,517.5v-2h2.2v2zM843.4,517.5v-2.5h2.2v2.5zM847.1,517.5v-1.5h2.2v1.5zM850.3,517.5v-5h2.2v5zM853.2,517.5v-2.5h2.2v2.5zM856.0,517.5v-4h2.2v4zM860.1,517.5v-4h2.2v4zM863.2,517.5v-2.5h2.2v2.5zM866.3,517.5v-1.5h2.2v1.5zM870.0,517.5v-1h2.2v1zM873.1,517.5v-5h2.2v5zM876.4,517.5v-1h2.2v1zM879.6,517.5v-3h2.2v3zM882.9,517.5v-1.5h2.2v1.5zM885.7,517.5v-2.5h2.2v2.5zM889.8,517.5v-1.5h2.2v1.5zM892.5,517.5v-3h2.2v3zM895.1,517.5v-2h2.2v2zM898.1,517.5v-2h2.2v2zM902.0,517.5v-3h2.2v3zM905.2,517.5v-5h2.2v5zM908.8,517.5v-1.5h2.2v1.5zM911.9,517.5v-2h2.2v2zM915.1,517.5v-1.5h2.2v1.5zM918.1,517.5v-1h2.2v1zM921.6,517.5v-3h2.2v3zM924.4,517.5v-2.5h2.2v2.5zM927.1,517.5v-1.5h2.2v1.5zM930.4,517.5v-3h2.2v3zM934.4,517.5v-4h2.2v4zM938.4,517.5v-3h2.2v3zM942.0,517.5v-1h2.2v1zM945.4,517.5v-2.5h2.2v2.5zM949.4,517.5v-2h2.2v2zM952.4,517.5v-2h2.2v2zM955.3,517.5v-3h2.2v3zM958.8,517.5v-2.5h2.2v2.5zM961.8,517.5v-2h2.2v2zM964.8,517.5v-1h2.2v1zM968.9,517.5v-1h2.2v1zM971.6,517.5v-2.5h2.2v2.5zM974.9,517.5v-2.5h2.2v2.5zM978.9,517.5v-1.5h2.2v1.5zM982.5,517.5v-4h2.2v4zM986.1,517.5v-4h2.2v4zM990.2,517.5v-3h2.2v3zM993.8,517.5v-2.5h2.2v2.5zM996.9,517.5v-2h2.2v2zM1000.1,517.5v-3h2.2v3zM1004.2,517.5v-2h2.2v2zM1006.8,517.5v-3h2.2v3zM1010.1,517.5v-1h2.2v1zM1012.8,517.5v-4h2.2v4zM1016.7,517.5v-3h2.2v3zM1020.2,517.5v-3h2.2v3zM1022.8,517.5v-2h2.2v2zM1025.7,517.5v-5h2.2v5zM1028.3,517.5v-3h2.2v3zM1032.3,517.5v-3h2.2v3zM1035.3,517.5v-3h2.2v3zM1038.2,517.5v-2h2.2v2zM1040.8,517.5v-4h2.2v4zM1043.6,517.5v-3h2.2v3zM1046.9,517.5v-2.5h2.2v2.5zM1049.9,517.5v-1h2.2v1zM1052.6,517.5v-1.5h2.2v1.5zM1055.4,517.5v-1h2.2v1zM1058.6,517.5v-3h2.2v3zM1061.7,517.5v-2.5h2.2v2.5zM1064.4,517.5v-2h2.2v2zM1068.0,517.5v-4h2.2v4zM1071.7,517.5v-5h2.2v5zM1074.6,517.5v-2h2.2v2zM1077.2,517.5v-4h2.2v4zM1080.9,517.5v-2h2.2v2zM1084.9,517.5v-1h2.2v1zM1088.7,517.5v-2.5h2.2v2.5zM1091.5,517.5v-1h2.2v1zM1094.3,517.5v-3h2.2v3zM1098.3,517.5v-4h2.2v4zM1102.2,517.5v-1h2.2v1zM1105.7,517.5v-2.5h2.2v2.5zM1109.0,517.5v-1h2.2v1zM1112.3,517.5v-1.5h2.2v1.5zM1116.0,517.5v-1.5h2.2v1.5zM1119.6,517.5v-1.5h2.2v1.5zM1123.3,517.5v-5h2.2v5zM1126.3,517.5v-1.5h2.2v1.5zM1130.2,517.5v-2.5h2.2v2.5zM1133.9,517.5v-2.5h2.2v2.5zM1136.8,517.5v-5h2.2v5zM1140.2,517.5v-4h2.2v4zM1142.9,517.5v-3h2.2v3zM1146.6,517.5v-2.5h2.2v2.5zM1149.4,517.5v-2h2.2v2zM1152.5,517.5v-3h2.2v3zM1156.0,517.5v-2h2.2v2zM1158.6,517.5v-1h2.2v1zM1161.9,517.5v-1.5h2.2v1.5zM1165.6,517.5v-5h2.2v5zM1168.6,517.5v-3h2.2v3zM1171.9,517.5v-5h2.2v5zM1175.7,517.5v-2.5h2.2v2.5zM1178.7,517.5v-1.5h2.2v1.5zM1182.7,517.5v-1h2.2v1zM1185.8,517.5v-1.5h2.2v1.5zM1189.6,517.5v-5h2.2v5zM1193.7,517.5v-4h2.2v4zM1196.6,517.5v-2.5h2.2v2.5zM1199.3,517.5v-1.5h2.2v1.5zM1202.1,517.5v-3h2.2v3zM1206.2,517.5v-2h2.2v2zM1209.7,517.5v-3h2.2v3zM1213.6,517.5v-3h2.2v3zM1216.5,517.5v-5h2.2v5zM1219.7,517.5v-2h2.2v2zM1222.3,517.5v-5h2.2v5zM1226.0,517.5v-4h2.2v4zM1229.0,517.5v-2h2.2v2zM1232.2,517.5v-4h2.2v4zM1235.3,517.5v-3h2.2v3zM1237.9,517.5v-3h2.2v3zM1241.8,517.5v-1.5h2.2v1.5zM1245.8,517.5v-2.5h2.2v2.5zM1249.4,517.5v-3h2.2v3zM1252.4,517.5v-1.5h2.2v1.5zM1255.6,517.5v-1.5h2.2v1.5zM1258.8,517.5v-4h2.2v4zM1262.5,517.5v-1h2.2v1zM1265.5,517.5v-1h2.2v1zM1269.4,517.5v-3h2.2v3zM1272.9,517.5v-2h2.2v2zM1275.9,517.5v-3h2.2v3zM1279.1,517.5v-3h2.2v3zM1282.0,517.5v-3h2.2v3zM1285.8,517.5v-4h2.2v4zM1289.7,517.5v-4h2.2v4zM1293.7,517.5v-2.5h2.2v2.5zM1297.4,517.5v-1h2.2v1zM1301.4,517.5v-4h2.2v4zM1304.7,517.5v-2h2.2v2zM1308.2,517.5v-3h2.2v3zM1311.6,517.5v-2h2.2v2zM1314.4,517.5v-4h2.2v4zM1317.5,517.5v-3h2.2v3zM1320.5,517.5v-3h2.2v3zM1323.7,517.5v-2.5h2.2v2.5zM1326.8,517.5v-4h2.2v4zM1329.5,517.5v-2h2.2v2zM1332.3,517.5v-5h2.2v5zM1335.7,517.5v-5h2.2v5zM1339.6,517.5v-5h2.2v5zM1342.9,517.5v-2.5h2.2v2.5zM1345.9,517.5v-2h2.2v2zM1349.0,517.5v-1.5h2.2v1.5zM1352.0,517.5v-3h2.2v3zM1355.0,517.5v-2.5h2.2v2.5zM1359.0,517.5v-4h2.2v4zM1362.1,517.5v-2.5h2.2v2.5zM1365.3,517.5v-3h2.2v3zM1369.0,517.5v-5h2.2v5zM1372.0,517.5v-3h2.2v3zM1374.8,517.5v-2.5h2.2v2.5zM1377.6,517.5v-2.5h2.2v2.5zM1380.8,517.5v-5h2.2v5zM1384.0,517.5v-3h2.2v3zM1387.9,517.5v-1h2.2v1zM1390.7,517.5v-4h2.2v4zM1394.3,517.5v-5h2.2v5zM1398.4,517.5v-5h2.2v5zM1401.0,517.5v-4h2.2v4zM1405.0,517.5v-5h2.2v5zM1409.0,517.5v-2.5h2.2v2.5zM1412.8,517.5v-2.5h2.2v2.5zM1415.6,517.5v-1.5h2.2v1.5zM1419.7,517.5v-5h2.2v5zM1422.4,517.5v-1h2.2v1zM1425.0,517.5v-2h2.2v2zM1427.9,517.5v-1h2.2v1zM1431.5,517.5v-3h2.2v3zM1435.5,517.5v-3h2.2v3zM1438.9,517.5v-4h2.2v4zM1442.6,517.5v-1.5h2.2v1.5zM1445.3,517.5v-3h2.2v3zM1448.7,517.5v-2.5h2.2v2.5zM1451.9,517.5v-2.5h2.2v2.5zM1455.7,517.5v-1h2.2v1zM1458.3,517.5v-3h2.2v3zM1462.4,517.5v-3h2.2v3zM1466.4,517.5v-2.5h2.2v2.5zM1469.7,517.5v-2.5h2.2v2.5zM1473.2,517.5v-1h2.2v1zM1477.2,517.5v-3h2.2v3zM1479.9,517.5v-2.5h2.2v2.5zM1483.2,517.5v-4h2.2v4zM1486.0,517.5v-2.5h2.2v2.5zM1489.6,517.5v-3h2.2v3zM1492.5,517.5v-1h2.2v1zM1496.1,517.5v-4h2.2v4zM1499.3,517.5v-4h2.2v4zM1502.2,517.5v-3h2.2v3zM1505.9,517.5v-1.5h2.2v1.5zM1508.8,517.5v-2.5h2.2v2.5zM1511.9,517.5v-2.5h2.2v2.5zM1514.8,517.5v-2.5h2.2v2.5zM1517.8,517.5v-3h2.2v3zM1520.6,517.5v-5h2.2v5zM1524.1,517.5v-2.5h2.2v2.5zM1527.4,517.5v-1h2.2v1zM1531.4,517.5v-2h2.2v2zM1535.4,517.5v-1h2.2v1zM1538.3,517.5v-2h2.2v2zM1541.6,517.5v-1h2.2v1zM1544.4,517.5v-5h2.2v5zM1548.4,517.5v-3h2.2v3zM1552.1,517.5v-1.5h2.2v1.5zM1556.1,517.5v-3h2.2v3zM1559.0,517.5v-5h2.2v5zM1561.6,517.5v-4h2.2v4zM1565.5,517.5v-3h2.2v3zM1568.7,517.5v-1.5h2.2v1.5zM1571.3,517.5v-3h2.2v3zM1574.1,517.5v-4h2.2v4zM1578.1,517.5v-1.5h2.2v1.5zM1581.5,517.5v-2.5h2.2v2.5zM1584.7,517.5v-3h2.2v3zM1588.5,517.5v-4h2.2v4zM1591.3,517.5v-5h2.2v5zM1594.2,517.5v-5h2.2v5zM1597.1,517.5v-3h2.2v3zM1600.8,517.5v-5h2.2v5zM1603.4,517.5v-4h2.2v4zM1606.4,517.5v-4h2.2v4zM1609.0,517.5v-1h2.2v1zM1612.3,517.5v-1h2.2v1zM1615.3,517.5v-1.5h2.2v1.5zM1619.3,517.5v-3h2.2v3zM1622.4,517.5v-3h2.2v3zM1626.5,517.5v-1h2.2v1zM1629.5,517.5v-3h2.2v3zM1633.4,517.5v-3h2.2v3zM1636.0,517.5v-1.5h2.2v1.5zM1638.7,517.5v-2.5h2.2v2.5zM1641.4,517.5v-5h2.2v5zM1645.5,517.5v-4h2.2v4zM1649.3,517.5v-4h2.2v4zM1653.1,517.5v-2h2.2v2zM1657.1,517.5v-2h2.2v2zM1659.7,517.5v-3h2.2v3zM1663.5,517.5v-2h2.2v2zM1667.0,517.5v-3h2.2v3zM1670.9,517.5v-5h2.2v5zM1674.1,517.5v-1.5h2.2v1.5zM1677.4,517.5v-4h2.2v4zM1681.2,517.5v-2.5h2.2v2.5zM1684.4,517.5v-1h2.2v1zM1687.7,517.5v-3h2.2v3zM1690.5,517.5v-4h2.2v4zM1694.5,517.5v-1.5h2.2v1.5zM1697.5,517.5v-1.5h2.2v1.5zM1700.4,517.5v-4h2.2v4zM1703.7,517.5v-5h2.2v5zM1706.6,517.5v-2h2.2v2zM1709.8,517.5v-2.5h2.2v2.5zM1713.5,517.5v-1.5h2.2v1.5zM1717.3,517.5v-3h2.2v3zM1720.3,517.5v-3h2.2v3zM1723.5,517.5v-3h2.2v3zM1726.4,517.5v-2.5h2.2v2.5zM1729.3,517.5v-2.5h2.2v2.5zM1732.1,517.5v-2.5h2.2v2.5zM1735.2,517.5v-4h2.2v4zM1738.2,517.5v-2.5h2.2v2.5zM1741.5,517.5v-2.5h2.2v2.5zM1745.1,517.5v-1.5h2.2v1.5zM1748.7,517.5v-1h2.2v1zM1751.4,517.5v-5h2.2v5zM1755.4,517.5v-2.5h2.2v2.5zM1759.2,517.5v-3h2.2v3zM1761.9,517.5v-3h2.2v3zM1764.8,517.5v-1h2.2v1zM1767.7,517.5v-2.5h2.2v2.5zM1771.7,517.5v-3h2.2v3zM1775.1,517.5v-2h2.2v2zM1778.4,517.5v-3h2.2v3zM1782.1,517.5v-1h2.2v1zM1784.9,517.5v-3h2.2v3zM1787.8,517.5v-3h2.2v3zM1790.9,517.5v-1h2.2v1zM1793.8,517.5v-3h2.2v3zM1796.5,517.5v-2.5h2.2v2.5zM1800.3,517.5v-3h2.2v3zM1803.5,517.5v-3h2.2v3zM1806.4,517.5v-3h2.2v3zM1809.1,517.5v-1h2.2v1zM1812.9,517.5v-5h2.2v5zM1815.6,517.5v-1.5h2.2v1.5zM1819.4,517.5v-2h2.2v2zM1822.9,517.5v-1.5h2.2v1.5zM1826.5,517.5v-4h2.2v4zM1830.2,517.5v-4h2.2v4zM1834.3,517.5v-3h2.2v3zM1837.5,517.5v-1h2.2v1zM1840.5,517.5v-3h2.2v3zM1843.8,517.5v-1h2.2v1z" fill="#cacbcd"/><path d="M306.0,502.5C307.3,500.3 308.6,498.1 309.9,497.7C311.2,497.2 312.5,497.1 313.7,497.0C314.9,496.9 316.0,496.9 317.1,496.9C318.3,496.9 319.5,499.6 320.7,499.6C321.6,499.6 322.5,499.5 323.4,499.5C324.7,499.5 326.0,500.1 327.2,500.8C328.2,501.3 329.1,502.9 330.1,502.9C331.0,502.9 332.0,497.3 333.0,497.3C334.1,497.3 335.3,499.9 336.4,499.9C337.6,499.9 338.9,497.8 340.1,497.8C341.0,497.8 341.9,499.0 342.7,499.0C343.6,499.0 344.4,498.5 345.2,498.5C346.2,498.5 347.1,498.9 348.0,498.9C349.3,498.9 350.6,497.7 351.9,497.7C352.8,497.7 353.7,502.3 354.6,502.3C355.5,502.3 356.3,502.2 357.2,501.8C358.5,501.3 359.8,497.8 361.1,497.8C362.0,497.8 362.9,505.2 363.8,505.2C364.9,505.2 366.0,497.9 367.1,497.9C368.2,497.9 369.3,498.0 370.3,498.3C371.6,498.6 372.8,501.6 374.1,501.6C375.3,501.6 376.5,496.8 377.8,496.8C378.7,496.8 379.7,507.6 380.7,507.6C381.8,507.6 382.8,502.6 383.9,501.0C384.9,499.4 386.0,498.2 387.0,497.9C388.1,497.6 389.3,497.4 390.4,497.4C391.7,497.4 392.9,498.2 394.1,498.8C395.3,499.4 396.5,500.5 397.6,501.0C398.6,501.3 399.6,501.5 400.6,501.5C401.9,501.5 403.2,500.7 404.5,500.1C405.4,499.6 406.4,498.6 407.4,498.6C408.6,498.6 409.8,500.9 411.1,501.4C412.1,501.8 413.1,502.0 414.1,502.1M422.6,501.6C423.8,501.4 425.0,501.2 426.1,500.6C427.3,500.0 428.4,498.6 429.5,498.3C430.7,498.0 431.8,497.8 433.0,497.8C434.1,497.8 435.3,500.9 436.4,500.9C437.4,500.9 438.3,497.0 439.3,497.0C440.1,497.0 441.0,497.7 441.8,498.0C442.8,498.2 443.7,498.1 444.7,498.4C445.7,498.8 446.8,500.1 447.8,500.1C448.7,500.1 449.6,498.1 450.5,498.1C451.7,498.1 452.9,500.5 454.2,501.3C455.1,501.8 456.0,502.3 456.9,502.3C458.0,502.3 459.2,499.6 460.3,499.6C461.4,499.6 462.6,501.5 463.7,501.5C464.8,501.5 465.8,498.0 466.9,498.0C468.2,498.0 469.5,501.1 470.8,501.1C471.9,501.1 473.0,498.6 474.1,498.3C475.0,498.1 476.0,498.0 477.0,498.0C478.0,498.0 479.0,499.8 479.9,500.3C480.9,500.8 481.9,501.1 482.8,501.1C483.8,501.1 484.7,498.8 485.6,498.8C486.7,498.8 487.9,500.3 489.0,500.3C490.0,500.3 491.0,497.7 492.0,497.7C493.1,497.7 494.1,500.5 495.2,501.1C496.3,501.6 497.3,501.8 498.4,501.8C499.4,501.8 500.5,501.7 501.5,501.5C502.8,501.2 504.1,498.1 505.4,498.1C506.6,498.1 507.9,500.8 509.1,500.8C510.1,500.8 511.1,500.8 512.1,500.6C513.2,500.4 514.3,497.5 515.4,497.5C516.6,497.5 517.9,497.5 519.1,497.6M524.7,507.9C525.7,505.2 526.6,502.6 527.5,501.8C528.8,500.8 530.1,501.3 531.4,500.3C532.3,499.6 533.1,496.8 534.0,496.8C535.2,496.8 536.4,497.7 537.6,498.4C538.7,499.1 539.9,500.0 541.0,500.7C541.9,501.3 542.8,502.3 543.7,502.3C544.9,502.3 546.0,500.9 547.2,500.1C548.3,499.2 549.3,497.2 550.4,497.2C551.4,497.2 552.3,500.4 553.2,500.4C554.1,500.4 555.0,499.9 555.8,499.8C556.9,499.7 558.0,499.6 559.1,499.6C559.9,499.6 560.8,500.9 561.6,500.9C563.0,500.9 564.3,500.8 565.6,500.4C566.6,500.1 567.6,497.6 568.6,497.6C569.7,497.6 570.7,500.2 571.7,500.8C572.8,501.5 573.8,501.8 574.9,501.8C576.1,501.8 577.3,497.2 578.5,497.2C579.8,497.2 581.0,499.8 582.3,499.8C583.6,499.8 584.9,498.0 586.1,498.0C587.1,498.0 588.0,498.2 588.9,498.2C589.9,498.2 590.8,497.0 591.8,497.0C592.6,497.0 593.5,498.6 594.3,499.1C595.5,499.7 596.7,499.8 597.9,500.0C598.8,500.2 599.8,500.5 600.8,500.5C601.7,500.5 602.7,497.8 603.6,497.8C604.6,497.8 605.6,497.9 606.6,498.1C607.5,498.3 608.4,501.7 609.4,501.7C610.4,501.7 611.5,498.1 612.5,498.1C613.5,498.1 614.6,501.5 615.6,501.5C616.6,501.5 617.6,498.3 618.6,497.7C619.9,497.0 621.2,496.6 622.5,496.6C623.4,496.6 624.3,496.9 625.1,497.3C626.5,497.9 627.8,500.3 629.1,500.3C630.0,500.3 630.8,497.7 631.7,497.7C632.8,497.7 634.0,497.8 635.1,497.9C636.2,498.0 637.3,498.2 638.3,498.2C639.6,498.2 640.9,498.0 642.2,498.0C643.2,498.0 644.2,501.2 645.2,501.2C646.1,501.2 647.0,499.0 647.9,496.7M654.5,497.9C655.5,497.4 656.5,497.0 657.5,497.0C658.6,497.0 659.8,502.1 660.9,502.3C661.9,502.6 663.0,502.7 664.0,502.7C665.2,502.7 666.4,500.6 667.6,500.4C668.5,500.2 669.4,500.3 670.3,500.1C671.4,499.9 672.6,496.7 673.7,496.7C674.9,496.7 676.2,501.1 677.5,501.1C678.5,501.1 679.5,497.7 680.5,497.7C681.7,497.7 682.9,499.0 684.1,499.6C685.1,500.1 686.2,500.8 687.3,500.8C688.6,500.8 689.8,499.3 691.1,497.8M699.7,498.4C700.6,498.6 701.4,498.8 702.3,498.8C703.6,498.8 704.8,497.5 706.1,497.5C707.1,497.5 708.1,497.7 709.1,498.1C710.4,498.7 711.6,501.4 712.9,501.4C714.0,501.4 715.1,496.7 716.1,496.7C717.4,496.7 718.7,499.6 720.0,500.1C721.2,500.7 722.5,500.9 723.8,500.9C724.9,500.9 726.0,497.2 727.2,497.2C728.2,497.2 729.2,500.0 730.2,500.8C731.5,501.7 732.7,502.2 734.0,502.2C735.2,502.2 736.4,501.9 737.7,501.3C738.6,500.8 739.6,497.1 740.6,497.1C741.8,497.1 743.0,498.1 744.2,498.8C745.4,499.4 746.6,500.3 747.8,500.8C749.1,501.4 750.4,501.9 751.6,501.9C752.6,501.9 753.5,501.1 754.5,500.4C755.6,499.7 756.7,497.6 757.8,497.6C759.1,497.6 760.3,501.4 761.6,501.4C762.7,501.4 763.8,498.7 764.9,498.7C765.9,498.7 766.9,500.4 767.8,500.4C769.1,500.4 770.3,497.5 771.5,497.5C772.8,497.5 774.0,498.2 775.3,498.2C776.6,498.2 777.9,497.9 779.2,497.7C780.1,497.6 781.0,497.2 782.0,497.2C782.9,497.2 783.8,500.9 784.7,500.9C785.9,500.9 787.1,497.6 788.3,497.6C789.3,497.6 790.3,502.7 791.3,502.7C792.6,502.7 793.8,497.5 795.1,497.5C796.0,497.5 796.9,497.8 797.8,498.4C799.0,499.2 800.3,502.6 801.5,502.6C802.7,502.6 803.8,498.2 805.0,498.2C806.0,498.2 807.0,501.6 808.0,501.6C809.1,501.6 810.2,497.8 811.3,497.8C812.5,497.8 813.7,502.2 814.9,502.2C816.0,502.2 817.2,497.5 818.4,497.5C819.6,497.5 820.8,497.8 822.0,498.3C823.2,498.8 824.4,501.0 825.6,501.0C826.8,501.0 828.1,498.2 829.4,497.8C830.2,497.6 831.1,497.5 832.0,497.5C833.1,497.5 834.2,499.8 835.3,499.8C836.5,499.9 837.8,499.9 839.0,499.9C840.1,499.9 841.1,499.9 842.2,499.7C843.2,499.6 844.3,497.6 845.3,497.6C846.5,497.6 847.7,497.7 848.9,497.8C849.9,497.9 851.0,501.6 852.0,501.6C852.9,501.6 853.7,500.8 854.6,500.1M864.9,502.8C865.9,504.4 867.0,505.9 868.0,505.9C869.0,505.9 870.0,498.3 870.9,498.1C872.0,497.8 873.1,497.7 874.1,497.7C875.1,497.7 876.0,501.2 876.9,501.4C877.8,501.6 878.7,501.7 879.6,501.7C880.7,501.7 881.7,500.4 882.8,500.4C883.7,500.4 884.6,507.1 885.5,507.1C886.7,507.1 887.8,497.7 889.0,497.7C890.3,497.7 891.6,500.0 892.9,500.0C894.1,500.0 895.3,497.6 896.5,497.6C897.6,497.6 898.6,501.8 899.6,501.8C900.5,501.8 901.3,497.1 902.2,497.1C903.3,497.1 904.3,500.0 905.4,501.0C906.6,502.0 907.8,503.0 908.9,503.0C909.9,503.0 910.8,498.5 911.7,498.5C912.8,498.5 913.9,500.4 915.0,500.4C916.2,500.4 917.5,497.3 918.7,497.3C919.7,497.3 920.6,497.3 921.5,497.3C922.4,497.3 923.3,497.9 924.3,498.4C925.5,499.0 926.7,501.0 927.9,501.0C929.0,501.0 930.2,498.6 931.3,497.9C932.6,497.2 933.9,496.8 935.2,496.8C936.3,496.8 937.4,497.1 938.5,497.5C939.8,497.9 941.0,498.6 942.3,499.4M950.8,498.1C951.7,497.7 952.5,497.4 953.4,497.4C954.6,497.4 955.8,501.2 957.0,501.2C958.0,501.2 958.9,498.1 959.9,497.9C961.2,497.6 962.5,497.6 963.7,497.5C965.0,497.4 966.4,497.3 967.7,497.3C968.8,497.3 970.0,497.4 971.1,497.7C972.3,498.0 973.4,502.0 974.6,502.0C975.7,502.0 976.8,501.4 977.9,501.2C978.9,501.1 980.0,501.2 981.0,501.0C982.0,500.8 983.0,498.7 984.0,498.7C985.3,498.7 986.7,500.0 988.0,500.0C989.2,500.0 990.5,498.9 991.7,498.6C992.9,498.3 994.0,498.1 995.2,498.1C996.1,498.1 997.0,500.1 997.8,500.1C998.7,500.1 999.6,498.3 1000.4,498.1C1001.7,497.9 1003.0,497.9 1004.3,497.8C1005.4,497.7 1006.5,497.7 1007.6,497.6M1015.9,498.4C1017.0,498.1 1018.1,497.9 1019.2,497.9C1020.2,497.9 1021.3,501.6 1022.3,501.6C1023.5,501.6 1024.6,498.9 1025.8,498.9C1026.7,498.9 1027.6,500.1 1028.5,500.3C1029.8,500.5 1031.1,500.4 1032.4,500.6C1033.3,500.8 1034.3,501.3 1035.2,501.3C1036.4,501.3 1037.6,498.9 1038.8,498.9C1039.7,498.9 1040.5,501.9 1041.4,501.9C1042.3,501.9 1043.2,497.9 1044.1,497.9C1045.0,497.9 1045.9,498.0 1046.8,498.4C1047.8,498.9 1048.9,501.1 1050.0,501.1C1051.3,501.1 1052.5,497.2 1053.8,497.2C1054.7,497.2 1055.6,499.5 1056.5,501.9M1065.7,501.4C1066.9,501.4 1068.1,501.4 1069.3,501.3C1070.2,501.3 1071.2,498.2 1072.1,498.2C1073.3,498.2 1074.6,500.3 1075.8,500.3C1077.2,500.3 1078.5,499.3 1079.8,498.9C1080.8,498.5 1081.8,497.9 1082.9,497.9C1084.0,497.9 1085.1,501.1 1086.2,501.3C1087.4,501.4 1088.6,501.5 1089.8,501.5C1091.0,501.5 1092.2,497.6 1093.4,497.6C1094.2,497.6 1095.1,498.0 1095.9,498.3C1097.1,498.7 1098.4,499.3 1099.6,499.8C1100.8,500.4 1102.0,501.5 1103.3,501.5C1104.5,501.5 1105.8,499.4 1107.0,498.5C1108.0,497.9 1108.9,496.7 1109.8,496.7C1110.7,496.7 1111.6,497.2 1112.5,497.4C1113.7,497.7 1114.9,498.3 1116.1,498.3C1117.2,498.3 1118.4,497.4 1119.6,497.4C1120.4,497.4 1121.3,501.0 1122.1,501.5C1123.3,502.2 1124.5,502.5 1125.7,502.5C1126.7,502.5 1127.7,502.4 1128.8,502.3C1129.8,502.1 1130.9,497.1 1131.9,497.1C1133.2,497.1 1134.4,501.4 1135.6,501.4C1136.5,501.4 1137.4,498.2 1138.2,497.6C1139.1,497.1 1139.9,496.9 1140.7,496.9C1142.1,496.9 1143.4,498.0 1144.7,498.9C1145.5,499.5 1146.4,500.9 1147.2,501.0C1148.4,501.2 1149.7,501.2 1150.9,501.2C1151.8,501.2 1152.7,498.2 1153.7,498.2C1154.9,498.2 1156.1,499.3 1157.4,499.7C1158.5,500.0 1159.6,500.2 1160.8,500.2C1162.0,500.2 1163.3,498.6 1164.6,498.6C1165.4,498.6 1166.3,501.6 1167.2,501.6C1168.3,501.6 1169.3,497.5 1170.4,497.5C1171.3,497.5 1172.1,497.9 1173.0,497.9C1174.3,497.9 1175.6,497.4 1176.9,497.4C1177.8,497.4 1178.6,497.6 1179.5,497.9M1188.5,498.6C1189.5,499.4 1190.4,500.2 1191.4,500.7C1192.5,501.2 1193.6,501.5 1194.7,501.5C1195.8,501.5 1197.0,497.3 1198.1,497.3C1199.4,497.3 1200.6,497.4 1201.9,497.7C1202.8,497.9 1203.8,499.8 1204.7,499.8C1206.0,499.8 1207.2,497.8 1208.5,497.4C1209.7,497.0 1210.9,496.7 1212.0,496.7C1213.2,496.7 1214.4,501.9 1215.6,501.9C1216.8,501.9 1218.1,497.2 1219.3,497.2C1220.2,497.2 1221.1,498.2 1222.0,498.9C1223.3,499.8 1224.6,502.1 1225.9,502.1C1227.1,502.1 1228.3,497.4 1229.5,497.4C1230.8,497.4 1232.1,497.9 1233.4,497.9C1234.5,497.9 1235.7,497.3 1236.8,497.3C1238.0,497.3 1239.1,497.5 1240.3,497.6C1241.6,497.7 1242.9,498.0 1244.2,498.2C1245.1,498.3 1246.0,498.6 1246.9,498.6C1248.0,498.6 1249.1,498.0 1250.2,497.8C1251.1,497.6 1252.1,497.5 1253.0,497.4C1254.0,497.3 1255.0,497.0 1256.0,497.0C1257.2,497.0 1258.4,499.7 1259.6,502.4M1265.7,500.5C1267.0,501.3 1268.2,502.2 1269.5,502.2C1270.6,502.2 1271.7,501.2 1272.8,500.3C1273.9,499.5 1274.9,497.0 1276.0,497.0C1277.3,497.0 1278.6,501.6 1279.9,501.6C1280.9,501.6 1281.9,498.4 1282.9,497.9C1284.1,497.3 1285.4,497.2 1286.6,497.0C1287.5,496.8 1288.5,496.8 1289.4,496.8C1290.6,496.8 1291.7,499.1 1292.8,500.0C1293.7,500.7 1294.6,501.8 1295.5,501.8C1296.8,501.8 1298.0,500.3 1299.3,500.2C1300.4,500.1 1301.5,500.0 1302.6,500.0M1312.1,501.5C1313.1,501.5 1314.0,501.5 1315.0,501.4C1316.1,501.2 1317.2,498.7 1318.4,497.9C1319.3,497.2 1320.3,496.7 1321.3,496.7C1322.6,496.7 1323.9,497.2 1325.2,497.5C1326.0,497.6 1326.9,497.9 1327.7,497.9C1328.7,497.9 1329.6,497.4 1330.6,497.4C1331.8,497.4 1333.0,501.7 1334.2,501.7C1335.3,501.7 1336.4,500.7 1337.6,500.7C1338.8,500.7 1339.9,500.9 1341.1,501.1C1342.4,501.3 1343.7,501.9 1345.0,501.9C1346.1,501.9 1347.3,499.7 1348.4,499.7C1349.5,499.7 1350.6,500.3 1351.7,501.3C1352.8,502.3 1353.8,505.7 1354.9,505.7C1356.2,505.7 1357.5,502.0 1358.8,500.8C1360.0,499.6 1361.3,498.5 1362.5,498.5C1363.7,498.5 1364.9,502.6 1366.0,502.6C1367.3,502.6 1368.6,501.3 1369.9,501.3C1371.0,501.3 1372.1,502.2 1373.2,502.2C1374.5,502.2 1375.9,498.1 1377.2,498.1C1378.0,498.1 1378.9,498.4 1379.7,498.6M1387.0,498.6C1388.3,498.2 1389.6,497.9 1390.9,497.6C1391.7,497.4 1392.5,497.1 1393.4,497.1C1394.7,497.1 1396.0,497.2 1397.3,497.4C1398.4,497.6 1399.4,499.2 1400.5,499.9C1401.4,500.4 1402.3,501.1 1403.2,501.1C1404.1,501.1 1405.1,499.1 1406.1,499.1C1407.0,499.1 1407.8,506.8 1408.6,506.8C1409.9,506.8 1411.1,497.1 1412.4,497.1C1413.6,497.1 1414.9,506.0 1416.2,506.0C1417.1,506.0 1418.0,502.0 1418.8,500.8C1420.1,499.1 1421.5,498.2 1422.8,498.2C1423.6,498.2 1424.5,506.4 1425.4,506.4C1426.6,506.4 1427.8,502.5 1428.9,501.0C1429.8,499.8 1430.7,498.4 1431.6,498.0C1432.6,497.5 1433.5,497.3 1434.5,497.3C1435.5,497.3 1436.6,497.4 1437.7,497.7C1438.7,497.9 1439.6,498.7 1440.6,498.7C1441.8,498.7 1443.0,497.7 1444.1,497.6C1445.1,497.5 1446.0,497.5 1446.9,497.5C1448.2,497.5 1449.5,498.4 1450.8,498.9C1452.0,499.4 1453.3,499.9 1454.6,500.5M1464.2,500.7C1465.3,500.7 1466.5,500.6 1467.7,500.6C1468.7,500.5 1469.7,497.4 1470.7,497.4C1471.6,497.4 1472.6,501.2 1473.6,501.2C1474.9,501.2 1476.2,499.8 1477.5,499.3C1478.7,498.8 1479.9,498.8 1481.1,498.4C1482.0,498.0 1483.0,496.9 1483.9,496.9C1485.2,496.9 1486.5,497.1 1487.8,497.4C1488.9,497.7 1490.0,501.6 1491.1,501.6C1492.0,501.6 1493.0,497.9 1493.9,497.9C1495.0,497.9 1496.2,498.0 1497.3,498.1C1498.6,498.3 1499.9,502.0 1501.2,502.0C1502.4,502.0 1503.5,501.1 1504.6,500.7C1505.5,500.4 1506.4,499.9 1507.3,499.9C1508.2,499.9 1509.0,499.9 1509.9,499.9C1511.1,500.0 1512.2,501.0 1513.4,501.0C1514.3,501.0 1515.2,500.9 1516.2,500.6C1517.3,500.4 1518.5,499.1 1519.6,498.6C1520.7,498.2 1521.9,498.0 1523.0,498.0C1524.3,498.0 1525.7,498.2 1527.0,498.2C1527.9,498.2 1528.9,497.3 1529.9,497.3C1531.2,497.3 1532.5,502.5 1533.8,502.5C1534.9,502.5 1535.9,498.2 1537.0,498.2C1537.9,498.2 1538.8,502.4 1539.7,502.4C1540.8,502.4 1541.9,497.6 1543.0,497.6C1544.1,497.6 1545.1,501.1 1546.1,501.1C1547.1,501.1 1548.1,500.3 1549.1,499.7C1550.3,499.2 1551.5,497.6 1552.7,497.6C1553.8,497.6 1554.9,499.0 1556.1,499.0C1557.2,499.0 1558.3,497.6 1559.4,497.6C1560.7,497.6 1562.0,497.8 1563.3,498.2C1564.3,498.6 1565.4,499.9 1566.4,500.4C1567.4,500.9 1568.4,501.3 1569.5,501.3C1570.5,501.3 1571.5,501.3 1572.4,501.3C1573.7,501.2 1575.0,501.2 1576.3,501.2C1577.2,501.2 1578.1,502.0 1579.1,502.6C1580.2,503.4 1581.4,505.9 1582.6,505.9C1583.5,505.9 1584.4,498.6 1585.3,498.6C1586.6,498.6 1587.9,500.2 1589.2,500.7C1590.5,501.2 1591.8,501.4 1593.2,501.5C1594.1,501.6 1595.1,501.7 1596.1,501.7C1597.4,501.7 1598.7,498.5 1600.0,497.7C1600.8,497.2 1601.7,497.0 1602.6,496.8M1610.0,500.8C1611.1,501.5 1612.2,502.1 1613.3,502.1C1614.6,502.1 1615.9,499.6 1617.1,498.9C1618.4,498.2 1619.7,497.8 1620.9,497.8C1622.1,497.7 1623.3,497.7 1624.5,497.7C1625.5,497.7 1626.6,507.7 1627.7,507.7C1628.9,507.7 1630.1,498.3 1631.3,497.9C1632.4,497.6 1633.5,497.5 1634.7,497.5C1635.9,497.5 1637.2,498.3 1638.5,499.9C1639.4,501.0 1640.3,505.5 1641.2,505.5C1642.5,505.5 1643.8,498.1 1645.1,498.1C1646.1,498.1 1647.1,500.6 1648.1,500.6C1649.1,500.6 1650.1,497.3 1651.0,497.3C1652.0,497.3 1652.9,498.3 1653.9,498.8C1655.2,499.4 1656.5,500.5 1657.8,500.5C1658.9,500.5 1659.9,498.6 1661.0,498.3C1662.3,497.9 1663.5,497.7 1664.8,497.7C1665.9,497.7 1666.9,498.9 1667.9,499.6C1669.2,500.4 1670.5,502.2 1671.8,502.2C1673.1,502.2 1674.4,498.4 1675.8,498.4C1676.9,498.3 1678.0,498.3 1679.1,498.3C1680.4,498.3 1681.7,508.9 1683.0,508.9C1684.0,508.9 1685.0,501.9 1686.0,501.0C1686.9,500.1 1687.8,499.7 1688.7,499.7C1689.6,499.7 1690.5,502.5 1691.4,502.5C1692.6,502.5 1693.8,497.4 1695.0,497.4C1696.3,497.4 1697.6,501.3 1698.9,501.3C1700.0,501.3 1701.1,498.1 1702.2,498.1C1703.3,498.1 1704.4,501.2 1705.4,501.2C1706.4,501.2 1707.4,497.8 1708.5,497.8C1709.7,497.8 1711.0,501.4 1712.3,501.4C1713.4,501.4 1714.5,501.1 1715.6,500.5C1716.8,499.9 1718.1,498.1 1719.3,497.8C1720.4,497.6 1721.6,497.5 1722.7,497.5C1723.9,497.5 1725.2,499.2 1726.5,501.0M1732.6,499.9C1733.6,499.0 1734.7,498.0 1735.8,498.0C1737.0,498.0 1738.2,498.0 1739.4,498.0C1740.3,498.0 1741.2,498.8 1742.2,498.8C1743.5,498.8 1744.7,498.1 1746.0,498.1C1746.9,498.1 1747.8,507.0 1748.8,507.3C1749.6,507.6 1750.5,507.8 1751.3,507.8C1752.4,507.8 1753.5,501.7 1754.5,501.3C1755.8,500.8 1757.1,501.0 1758.4,500.5C1759.5,500.1 1760.5,498.4 1761.6,498.2C1762.8,497.8 1764.0,497.7 1765.2,497.7C1766.2,497.7 1767.2,501.7 1768.2,501.8C1769.4,501.9 1770.6,501.9 1771.9,501.9C1772.9,501.9 1773.9,501.9 1775.0,501.9C1776.2,501.9 1777.5,500.4 1778.8,500.4C1779.9,500.4 1781.0,500.5 1782.2,500.6C1783.5,500.7 1784.8,500.8 1786.1,500.9C1787.2,501.0 1788.3,501.2 1789.4,501.2C1790.6,501.2 1791.7,501.0 1792.9,500.5C1793.9,500.1 1794.9,498.0 1795.9,498.0C1796.8,498.0 1797.7,506.6 1798.6,506.6C1799.9,506.6 1801.1,497.5 1802.4,497.5C1803.4,497.4 1804.5,497.4 1805.5,497.4C1806.8,497.4 1808.1,501.2 1809.4,501.2C1810.4,501.2 1811.4,499.2 1812.4,498.7C1813.6,498.2 1814.8,498.2 1815.9,497.9C1817.2,497.6 1818.6,497.0 1819.9,496.9C1821.1,496.8 1822.4,496.8 1823.7,496.8C1824.9,496.8 1826.1,501.0 1827.3,501.0C1828.3,501.0 1829.3,500.9 1830.4,500.9C1831.6,500.9 1832.8,501.7 1834.1,501.7C1835.0,501.7 1835.9,501.5 1836.9,501.3C1837.9,500.9 1838.9,498.2 1839.9,498.2C1840.8,498.2 1841.7,503.0 1842.6,503.0C1843.7,503.0 1844.7,501.9 1845.8,500.7" fill="none" stroke="#8f9297" stroke-width="1.1"/><path d="M306.0,497.7C307.3,497.1 308.6,496.5 309.9,496.5C311.2,496.5 312.5,496.7 313.7,496.7C314.9,496.7 316.0,496.5 317.1,496.5C318.3,496.5 319.5,496.8 320.7,496.8C321.6,496.8 322.5,494.0 323.4,494.0C324.7,494.0 326.0,496.3 327.2,497.0C328.2,497.5 329.1,498.0 330.1,498.0C331.0,498.0 332.0,495.6 333.0,495.6C334.1,495.6 335.3,496.2 336.4,496.5C337.6,496.8 338.9,496.9 340.1,497.3C341.0,497.5 341.9,498.1 342.7,498.1C343.6,498.1 344.4,496.7 345.2,496.7C346.2,496.7 347.1,498.0 348.0,498.0C349.3,498.0 350.6,497.7 351.9,497.1C352.8,496.6 353.7,495.3 354.6,495.3C355.5,495.3 356.3,497.0 357.2,497.0C358.5,497.0 359.8,496.7 361.1,496.3C362.0,496.0 362.9,495.1 363.8,495.1C364.9,495.1 366.0,497.1 367.1,497.1C368.2,497.1 369.3,495.4 370.3,495.4C371.6,495.4 372.8,496.7 374.1,496.7C375.3,496.7 376.5,496.7 377.8,496.7C378.7,496.7 379.7,497.2 380.7,497.2C381.8,497.3 382.8,497.3 383.9,497.3C384.9,497.3 386.0,496.7 387.0,496.7C388.1,496.7 389.3,497.1 390.4,497.3C391.7,497.5 392.9,497.9 394.1,497.9C395.3,497.9 396.5,497.7 397.6,497.6C398.6,497.5 399.6,497.3 400.6,497.3C401.9,497.3 403.2,497.5 404.5,497.5C405.4,497.6 406.4,497.6 407.4,497.6C408.6,497.6 409.8,497.1 411.1,497.1C412.1,497.1 413.1,497.5 414.1,497.8M422.6,496.8C423.8,497.2 425.0,497.7 426.1,497.7C427.3,497.7 428.4,497.6 429.5,497.6C430.7,497.6 431.8,497.7 433.0,497.7C434.1,497.7 435.3,495.1 436.4,495.1C437.4,495.1 438.3,495.2 439.3,495.3C440.1,495.4 441.0,496.8 441.8,497.2C442.8,497.7 443.7,497.9 444.7,497.9C445.7,497.9 446.8,494.8 447.8,494.8C448.7,494.8 449.6,497.4 450.5,497.4C451.7,497.4 452.9,497.2 454.2,497.2C455.1,497.2 456.0,497.5 456.9,497.5C458.0,497.5 459.2,495.2 460.3,495.2C461.4,495.2 462.6,496.6 463.7,496.7C464.8,496.8 465.8,496.8 466.9,496.9C468.2,497.0 469.5,498.0 470.8,498.0C471.9,498.0 473.0,497.2 474.1,497.2C475.0,497.2 476.0,497.2 477.0,497.3C478.0,497.3 479.0,497.6 479.9,497.8C480.9,497.9 481.9,497.9 482.8,498.0C483.8,498.0 484.7,498.1 485.6,498.1C486.7,498.1 487.9,497.6 489.0,497.5C490.0,497.4 491.0,497.4 492.0,497.4C493.1,497.3 494.1,495.7 495.2,495.7C496.3,495.7 497.3,495.7 498.4,495.8C499.4,495.9 500.5,497.4 501.5,497.4C502.8,497.4 504.1,495.7 505.4,495.7C506.6,495.7 507.9,496.2 509.1,496.6C510.1,496.9 511.1,497.7 512.1,497.7C513.2,497.7 514.3,497.5 515.4,497.3C516.6,497.1 517.9,496.9 519.1,496.6M524.7,495.8C525.7,495.9 526.6,496.1 527.5,496.1C528.8,496.1 530.1,494.8 531.4,494.8C532.3,494.8 533.1,494.8 534.0,494.8C535.2,494.8 536.4,497.9 537.6,497.9C538.7,497.9 539.9,495.2 541.0,495.2C541.9,495.2 542.8,497.5 543.7,497.5C544.9,497.5 546.0,497.1 547.2,496.9C548.3,496.8 549.3,496.7 550.4,496.7C551.4,496.7 552.3,497.6 553.2,497.6C554.1,497.6 555.0,496.7 555.8,496.7C556.9,496.7 558.0,497.0 559.1,497.0C559.9,497.0 560.8,495.6 561.6,495.6C563.0,495.6 564.3,497.6 565.6,497.6C566.6,497.6 567.6,497.0 568.6,496.9C569.7,496.8 570.7,496.7 571.7,496.7C572.8,496.7 573.8,497.9 574.9,497.9C576.1,497.9 577.3,496.1 578.5,496.1C579.8,496.1 581.0,497.3 582.3,497.3C583.6,497.3 584.9,496.5 586.1,496.3C587.1,496.1 588.0,495.7 588.9,495.7C589.9,495.7 590.8,496.3 591.8,496.8C592.6,497.1 593.5,498.0 594.3,498.0C595.5,498.0 596.7,497.5 597.9,497.3C598.8,497.0 599.8,496.5 600.8,496.5C601.7,496.5 602.7,496.6 603.6,496.6C604.6,496.7 605.6,497.2 606.6,497.2C607.5,497.2 608.4,496.9 609.4,496.9C610.4,496.9 611.5,498.1 612.5,498.1C613.5,498.1 614.6,496.6 615.6,496.6C616.6,496.6 617.6,496.7 618.6,496.7C619.9,496.7 621.2,496.6 622.5,496.6C623.4,496.6 624.3,495.9 625.1,495.9C626.5,495.9 627.8,496.6 629.1,496.8C630.0,496.9 630.8,496.9 631.7,497.0C632.8,497.2 634.0,497.9 635.1,497.9C636.2,497.9 637.3,497.7 638.3,497.4C639.6,497.1 640.9,495.8 642.2,495.8C643.2,495.8 644.2,496.6 645.2,496.6C646.1,496.6 647.0,496.6 647.9,496.6M654.5,497.6C655.5,497.1 656.5,496.7 657.5,496.7C658.6,496.7 659.8,497.9 660.9,497.9C661.9,497.9 663.0,497.9 664.0,497.8C665.2,497.7 666.4,496.4 667.6,495.8C668.5,495.4 669.4,494.8 670.3,494.8C671.4,494.8 672.6,496.0 673.7,496.5C674.9,497.1 676.2,498.0 677.5,498.0C678.5,498.0 679.5,497.2 680.5,497.0C681.7,496.8 682.9,496.7 684.1,496.7C685.1,496.7 686.2,498.0 687.3,498.0C688.6,498.0 689.8,497.6 691.1,497.2M699.7,497.5C700.6,497.8 701.4,498.1 702.3,498.1C703.6,498.1 704.8,495.3 706.1,495.3C707.1,495.2 708.1,495.2 709.1,495.2C710.4,495.2 711.6,495.4 712.9,495.6C714.0,495.8 715.1,496.4 716.1,496.6C717.4,496.7 718.7,496.8 720.0,496.8C721.2,496.8 722.5,496.0 723.8,495.7C724.9,495.5 726.0,495.3 727.2,495.3C728.2,495.3 729.2,496.9 730.2,497.3C731.5,497.7 732.7,498.0 734.0,498.0C735.2,498.0 736.4,497.3 737.7,497.1C738.6,496.9 739.6,496.6 740.6,496.6C741.8,496.6 743.0,497.6 744.2,497.6C745.4,497.6 746.6,496.6 747.8,496.6C749.1,496.6 750.4,497.6 751.6,497.6C752.6,497.6 753.5,497.5 754.5,497.3C755.6,497.1 756.7,495.1 757.8,495.1C759.1,495.1 760.3,495.7 761.6,495.9C762.7,496.1 763.8,496.0 764.9,496.2C765.9,496.3 766.9,497.5 767.8,497.5C769.1,497.5 770.3,496.9 771.5,496.9C772.8,496.9 774.0,497.7 775.3,497.7C776.6,497.7 777.9,497.2 779.2,497.0C780.1,496.8 781.0,496.5 782.0,496.5C782.9,496.5 783.8,496.8 784.7,496.8C785.9,496.8 787.1,496.7 788.3,496.6C789.3,496.5 790.3,495.8 791.3,495.8C792.6,495.8 793.8,495.9 795.1,496.1C796.0,496.3 796.9,497.3 797.8,497.5C799.0,497.7 800.3,497.8 801.5,497.8C802.7,497.8 803.8,497.1 805.0,496.7C806.0,496.4 807.0,495.6 808.0,495.6C809.1,495.6 810.2,497.1 811.3,497.1C812.5,497.1 813.7,495.2 814.9,495.2C816.0,495.2 817.2,496.5 818.4,497.0C819.6,497.4 820.8,498.0 822.0,498.0C823.2,498.0 824.4,497.9 825.6,497.8C826.8,497.6 828.1,495.3 829.4,495.3C830.2,495.3 831.1,496.8 832.0,496.9C833.1,497.1 834.2,497.1 835.3,497.1C836.5,497.1 837.8,495.5 839.0,495.1C840.1,494.8 841.1,494.7 842.2,494.7C843.2,494.7 844.3,497.2 845.3,497.3C846.5,497.3 847.7,497.3 848.9,497.3C849.9,497.3 851.0,497.4 852.0,497.4C852.9,497.4 853.7,497.0 854.6,496.5M864.9,495.9C865.9,497.0 867.0,498.1 868.0,498.1C869.0,498.1 870.0,496.0 870.9,496.0C872.0,496.0 873.1,496.6 874.1,496.6C875.1,496.6 876.0,496.6 876.9,496.5C877.8,496.5 878.7,495.6 879.6,495.6C880.7,495.6 881.7,496.9 882.8,496.9C883.7,496.9 884.6,496.2 885.5,496.2C886.7,496.2 887.8,497.1 889.0,497.1C890.3,497.1 891.6,497.0 892.9,496.9C894.1,496.8 895.3,494.6 896.5,494.6C897.6,494.6 898.6,495.1 899.6,495.6C900.5,496.0 901.3,496.9 902.2,497.1C903.3,497.4 904.3,497.4 905.4,497.5C906.6,497.7 907.8,498.0 908.9,498.0C909.9,498.0 910.8,498.0 911.7,498.0C912.8,498.0 913.9,497.3 915.0,497.1C916.2,496.9 917.5,496.7 918.7,496.7C919.7,496.7 920.6,497.0 921.5,497.2C922.4,497.4 923.3,498.0 924.3,498.0C925.5,498.0 926.7,496.9 927.9,496.9C929.0,496.9 930.2,496.9 931.3,496.9C932.6,496.9 933.9,496.9 935.2,496.8C936.3,496.7 937.4,496.5 938.5,496.5C939.8,496.5 941.0,496.5 942.3,496.6M950.8,498.0C951.7,497.6 952.5,497.1 953.4,496.6C954.6,495.9 955.8,494.5 957.0,494.5C958.0,494.5 958.9,496.8 959.9,497.0C961.2,497.2 962.5,497.2 963.7,497.2C965.0,497.2 966.4,495.2 967.7,495.2C968.8,495.2 970.0,497.5 971.1,497.5C972.3,497.5 973.4,495.8 974.6,495.8C975.7,495.8 976.8,497.4 977.9,497.4C978.9,497.4 980.0,496.4 981.0,496.4C982.0,496.4 983.0,497.9 984.0,497.9C985.3,497.9 986.7,494.7 988.0,494.7C989.2,494.7 990.5,497.3 991.7,497.4C992.9,497.6 994.0,497.7 995.2,497.7C996.1,497.7 997.0,496.6 997.8,496.6C998.7,496.6 999.6,497.0 1000.4,497.0C1001.7,497.0 1003.0,496.3 1004.3,496.3C1005.4,496.3 1006.5,496.6 1007.6,497.0M1015.9,495.2C1017.0,496.2 1018.1,497.2 1019.2,497.2C1020.2,497.2 1021.3,496.8 1022.3,496.8C1023.5,496.8 1024.6,498.0 1025.8,498.0C1026.7,498.0 1027.6,496.6 1028.5,496.6C1029.8,496.6 1031.1,497.4 1032.4,497.4C1033.3,497.4 1034.3,495.9 1035.2,495.9C1036.4,495.9 1037.6,496.4 1038.8,496.4C1039.7,496.4 1040.5,495.2 1041.4,495.2C1042.3,495.2 1043.2,495.2 1044.1,495.3C1045.0,495.5 1045.9,497.6 1046.8,497.7C1047.8,497.8 1048.9,497.9 1050.0,497.9C1051.3,497.9 1052.5,497.3 1053.8,496.7C1054.7,496.3 1055.6,495.7 1056.5,495.1M1065.7,497.2C1066.9,497.2 1068.1,497.3 1069.3,497.3C1070.2,497.3 1071.2,497.3 1072.1,497.3C1073.3,497.3 1074.6,495.3 1075.8,495.3C1077.2,495.3 1078.5,497.9 1079.8,497.9C1080.8,497.9 1081.8,495.5 1082.9,495.5C1084.0,495.5 1085.1,497.7 1086.2,497.7C1087.4,497.7 1088.6,497.5 1089.8,497.1C1091.0,496.7 1092.2,495.5 1093.4,495.5C1094.2,495.5 1095.1,497.7 1095.9,497.7C1097.1,497.7 1098.4,497.3 1099.6,497.3C1100.8,497.3 1102.0,497.5 1103.3,497.5C1104.5,497.5 1105.8,497.5 1107.0,497.5C1108.0,497.5 1108.9,496.6 1109.8,496.6C1110.7,496.6 1111.6,496.8 1112.5,496.9C1113.7,497.0 1114.9,497.1 1116.1,497.1C1117.2,497.1 1118.4,496.8 1119.6,496.8C1120.4,496.8 1121.3,497.1 1122.1,497.2C1123.3,497.4 1124.5,497.7 1125.7,497.7C1126.7,497.7 1127.7,497.7 1128.8,497.6C1129.8,497.4 1130.9,496.8 1131.9,496.8C1133.2,496.8 1134.4,496.8 1135.6,496.8C1136.5,496.8 1137.4,497.5 1138.2,497.5C1139.1,497.5 1139.9,494.9 1140.7,494.9C1142.1,494.9 1143.4,496.6 1144.7,496.6C1145.5,496.6 1146.4,496.6 1147.2,496.6C1148.4,496.6 1149.7,497.2 1150.9,497.2C1151.8,497.2 1152.7,495.7 1153.7,495.7C1154.9,495.7 1156.1,496.6 1157.4,496.6C1158.5,496.6 1159.6,496.7 1160.8,496.7C1162.0,496.7 1163.3,496.1 1164.6,496.0C1165.4,495.9 1166.3,495.8 1167.2,495.8C1168.3,495.8 1169.3,497.2 1170.4,497.2C1171.3,497.2 1172.1,496.1 1173.0,496.1C1174.3,496.1 1175.6,496.9 1176.9,497.0C1177.8,497.0 1178.6,497.0 1179.5,497.0M1188.5,496.3C1189.5,496.5 1190.4,496.7 1191.4,496.9C1192.5,497.2 1193.6,497.9 1194.7,497.9C1195.8,497.9 1197.0,497.2 1198.1,497.1C1199.4,497.0 1200.6,497.1 1201.9,497.0C1202.8,496.9 1203.8,495.1 1204.7,495.1C1206.0,495.1 1207.2,496.6 1208.5,496.6C1209.7,496.6 1210.9,496.6 1212.0,496.6C1213.2,496.6 1214.4,497.3 1215.6,497.3C1216.8,497.3 1218.1,496.8 1219.3,496.8C1220.2,496.8 1221.1,497.9 1222.0,497.9C1223.3,497.9 1224.6,495.0 1225.9,495.0C1227.1,495.0 1228.3,497.2 1229.5,497.2C1230.8,497.2 1232.1,497.1 1233.4,497.1C1234.5,497.1 1235.7,497.2 1236.8,497.2C1238.0,497.2 1239.1,496.9 1240.3,496.9C1241.6,496.9 1242.9,497.6 1244.2,497.7C1245.1,497.9 1246.0,498.0 1246.9,498.0C1248.0,498.0 1249.1,497.2 1250.2,496.6C1251.1,496.1 1252.1,494.8 1253.0,494.8C1254.0,494.8 1255.0,496.4 1256.0,496.9C1257.2,497.5 1258.4,497.8 1259.6,498.0M1265.7,495.3C1267.0,496.6 1268.2,497.9 1269.5,497.9C1270.6,497.9 1271.7,495.7 1272.8,495.7C1273.9,495.7 1274.9,496.4 1276.0,496.7C1277.3,497.0 1278.6,497.3 1279.9,497.3C1280.9,497.3 1281.9,497.2 1282.9,497.1C1284.1,497.1 1285.4,497.1 1286.6,497.0C1287.5,496.9 1288.5,494.5 1289.4,494.5C1290.6,494.5 1291.7,496.5 1292.8,497.0C1293.7,497.3 1294.6,497.4 1295.5,497.4C1296.8,497.4 1298.0,495.8 1299.3,495.8C1300.4,495.8 1301.5,496.2 1302.6,496.7M1312.1,497.4C1313.1,496.6 1314.0,495.9 1315.0,495.6C1316.1,495.2 1317.2,495.1 1318.4,495.1C1319.3,495.1 1320.3,496.5 1321.3,496.5C1322.6,496.6 1323.9,496.6 1325.2,496.6C1326.0,496.7 1326.9,496.8 1327.7,496.9C1328.7,497.0 1329.6,497.3 1330.6,497.3C1331.8,497.3 1333.0,497.3 1334.2,497.3C1335.3,497.3 1336.4,496.6 1337.6,496.6C1338.8,496.6 1339.9,497.1 1341.1,497.1C1342.4,497.1 1343.7,495.7 1345.0,495.7C1346.1,495.7 1347.3,496.3 1348.4,496.6C1349.5,496.9 1350.6,497.7 1351.7,497.7C1352.8,497.7 1353.8,497.5 1354.9,497.4C1356.2,497.2 1357.5,496.6 1358.8,496.6C1360.0,496.6 1361.3,497.9 1362.5,497.9C1363.7,497.9 1364.9,496.4 1366.0,496.4C1367.3,496.4 1368.6,498.0 1369.9,498.0C1371.0,498.0 1372.1,497.7 1373.2,497.6C1374.5,497.4 1375.9,497.5 1377.2,497.3C1378.0,497.2 1378.9,497.0 1379.7,496.7M1387.0,497.8C1388.3,497.7 1389.6,497.5 1390.9,497.3C1391.7,497.1 1392.5,496.7 1393.4,496.7C1394.7,496.7 1396.0,497.1 1397.3,497.1C1398.4,497.1 1399.4,494.5 1400.5,494.5C1401.4,494.5 1402.3,496.7 1403.2,497.2C1404.1,497.7 1405.1,498.0 1406.1,498.0C1407.0,498.0 1407.8,497.1 1408.6,496.9C1409.9,496.6 1411.1,496.5 1412.4,496.5C1413.6,496.5 1414.9,496.6 1416.2,496.7C1417.1,496.8 1418.0,497.2 1418.8,497.2C1420.1,497.2 1421.5,495.6 1422.8,495.6C1423.6,495.6 1424.5,496.9 1425.4,496.9C1426.6,496.9 1427.8,496.5 1428.9,496.5C1429.8,496.5 1430.7,497.1 1431.6,497.1C1432.6,497.1 1433.5,497.1 1434.5,497.0C1435.5,496.9 1436.6,496.6 1437.7,496.6C1438.7,496.6 1439.6,497.6 1440.6,497.6C1441.8,497.6 1443.0,497.1 1444.1,496.6C1445.1,496.2 1446.0,495.2 1446.9,495.2C1448.2,495.2 1449.5,495.3 1450.8,495.5C1452.0,495.7 1453.3,496.5 1454.6,497.3M1464.2,498.0C1465.3,498.0 1466.5,498.0 1467.7,498.0C1468.7,497.9 1469.7,496.8 1470.7,496.8C1471.6,496.8 1472.6,497.2 1473.6,497.2C1474.9,497.2 1476.2,494.4 1477.5,494.4C1478.7,494.4 1479.9,497.5 1481.1,497.5C1482.0,497.5 1483.0,496.9 1483.9,496.9C1485.2,496.9 1486.5,497.1 1487.8,497.1C1488.9,497.1 1490.0,495.1 1491.1,495.1C1492.0,495.1 1493.0,497.5 1493.9,497.5C1495.0,497.5 1496.2,497.4 1497.3,497.3C1498.6,497.2 1499.9,497.2 1501.2,497.2C1502.4,497.2 1503.5,497.8 1504.6,497.8C1505.5,497.8 1506.4,496.5 1507.3,496.5C1508.2,496.5 1509.0,496.5 1509.9,496.5C1511.1,496.5 1512.2,498.0 1513.4,498.0C1514.3,498.0 1515.2,497.4 1516.2,497.4C1517.3,497.4 1518.5,497.6 1519.6,497.6C1520.7,497.7 1521.9,497.7 1523.0,497.7C1524.3,497.7 1525.7,497.6 1527.0,497.6C1527.9,497.5 1528.9,496.6 1529.9,496.6C1531.2,496.6 1532.5,497.5 1533.8,497.5C1534.9,497.5 1535.9,497.3 1537.0,497.3C1537.9,497.3 1538.8,498.0 1539.7,498.0C1540.8,498.0 1541.9,497.7 1543.0,497.4C1544.1,497.2 1545.1,496.7 1546.1,496.7C1547.1,496.7 1548.1,496.7 1549.1,496.7C1550.3,496.7 1551.5,496.8 1552.7,496.9C1553.8,497.1 1554.9,498.1 1556.1,498.1C1557.2,498.1 1558.3,497.0 1559.4,497.0C1560.7,497.0 1562.0,497.5 1563.3,497.5C1564.3,497.5 1565.4,495.7 1566.4,495.7C1567.4,495.7 1568.4,497.6 1569.5,497.6C1570.5,497.6 1571.5,497.2 1572.4,497.1C1573.7,496.9 1575.0,496.5 1576.3,496.5C1577.2,496.5 1578.1,497.8 1579.1,497.8C1580.2,497.8 1581.4,497.7 1582.6,497.5C1583.5,497.4 1584.4,496.6 1585.3,496.3C1586.6,495.9 1587.9,495.7 1589.2,495.7C1590.5,495.7 1591.8,496.8 1593.2,496.8C1594.1,496.8 1595.1,495.8 1596.1,495.8C1597.4,495.8 1598.7,497.4 1600.0,497.4C1600.8,497.4 1601.7,497.0 1602.6,496.5M1610.0,497.0C1611.1,496.7 1612.2,496.4 1613.3,496.4C1614.6,496.4 1615.9,497.8 1617.1,497.8C1618.4,497.8 1619.7,497.7 1620.9,497.6C1622.1,497.5 1623.3,497.5 1624.5,497.3C1625.5,497.0 1626.6,495.5 1627.7,495.5C1628.9,495.5 1630.1,497.1 1631.3,497.1C1632.4,497.1 1633.5,496.9 1634.7,496.8C1635.9,496.8 1637.2,496.7 1638.5,496.7C1639.4,496.7 1640.3,497.0 1641.2,497.0C1642.5,497.0 1643.8,496.2 1645.1,496.2C1646.1,496.2 1647.1,496.8 1648.1,496.8C1649.1,496.8 1650.1,494.9 1651.0,494.9C1652.0,494.9 1652.9,497.7 1653.9,497.7C1655.2,497.7 1656.5,496.9 1657.8,496.9C1658.9,496.9 1659.9,497.2 1661.0,497.4C1662.3,497.5 1663.5,497.6 1664.8,497.6C1665.9,497.6 1666.9,497.1 1667.9,497.1C1669.2,497.1 1670.5,498.0 1671.8,498.0C1673.1,498.0 1674.4,497.9 1675.8,497.8C1676.9,497.7 1678.0,497.6 1679.1,497.5C1680.4,497.3 1681.7,497.2 1683.0,497.0C1684.0,496.8 1685.0,496.8 1686.0,496.4C1686.9,496.1 1687.8,494.8 1688.7,494.8C1689.6,494.8 1690.5,497.8 1691.4,497.8C1692.6,497.8 1693.8,497.2 1695.0,496.9C1696.3,496.6 1697.6,495.9 1698.9,495.9C1700.0,495.9 1701.1,497.8 1702.2,497.8C1703.3,497.8 1704.4,497.6 1705.4,497.2C1706.4,496.8 1707.4,495.3 1708.5,495.3C1709.7,495.3 1711.0,497.9 1712.3,497.9C1713.4,497.9 1714.5,495.1 1715.6,495.1C1716.8,495.1 1718.1,497.5 1719.3,497.5C1720.4,497.5 1721.6,497.0 1722.7,497.0C1723.9,497.0 1725.2,497.0 1726.5,497.1M1732.6,496.7C1733.6,496.2 1734.7,495.7 1735.8,495.7C1737.0,495.7 1738.2,496.8 1739.4,497.1C1740.3,497.4 1741.2,497.6 1742.2,497.6C1743.5,497.6 1744.7,497.6 1746.0,497.6C1746.9,497.5 1747.8,496.6 1748.8,496.6C1749.6,496.6 1750.5,497.6 1751.3,497.6C1752.4,497.6 1753.5,496.6 1754.5,496.3C1755.8,495.9 1757.1,495.6 1758.4,495.6C1759.5,495.6 1760.5,497.2 1761.6,497.2C1762.8,497.2 1764.0,497.2 1765.2,497.2C1766.2,497.2 1767.2,495.3 1768.2,495.2C1769.4,495.2 1770.6,495.1 1771.9,495.1C1772.9,495.1 1773.9,497.2 1775.0,497.2C1776.2,497.2 1777.5,494.7 1778.8,494.7C1779.9,494.7 1781.0,496.8 1782.2,496.9C1783.5,497.0 1784.8,496.9 1786.1,497.0C1787.2,497.1 1788.3,498.0 1789.4,498.0C1790.6,498.0 1791.7,497.1 1792.9,497.1C1793.9,497.1 1794.9,497.8 1795.9,497.8C1796.8,497.8 1797.7,495.6 1798.6,495.6C1799.9,495.6 1801.1,495.6 1802.4,495.6C1803.4,495.6 1804.5,496.3 1805.5,496.7C1806.8,497.1 1808.1,498.0 1809.4,498.0C1810.4,498.0 1811.4,497.9 1812.4,497.9C1813.6,497.8 1814.8,497.8 1815.9,497.7C1817.2,497.6 1818.6,496.6 1819.9,496.6C1821.1,496.6 1822.4,496.7 1823.7,496.8C1824.9,496.9 1826.1,497.2 1827.3,497.2C1828.3,497.2 1829.3,495.4 1830.4,495.3C1831.6,495.1 1832.8,495.1 1834.1,495.1C1835.0,495.1 1835.9,496.3 1836.9,496.7C1837.9,497.2 1838.9,497.7 1839.9,497.7C1840.8,497.7 1841.7,496.7 1842.6,496.7C1843.7,496.7 1844.7,496.7 1845.8,496.8" fill="none" stroke="#7ea6d6" stroke-width="1.1"/><line x1="1477.5" y1="488" x2="1477.5" y2="525.5" stroke="#3b9a58" stroke-width="1.2" stroke-dasharray="3,2"/><line x1="1824.5" y1="488" x2="1824.5" y2="525.5" stroke="#555" stroke-width="1.5" stroke-dasharray="3,2"/></svg>
<div class="t" style="left:-443.0px;width:800px;text-align:right;top:375.8px;font-size:10px;line-height:10px;color:#8c8c8c;">80%</div>
<div class="t" style="left:-443.0px;width:800px;text-align:right;top:395.0px;font-size:10px;line-height:10px;color:#8c8c8c;">60%</div>
<div class="t" style="left:-443.0px;width:800px;text-align:right;top:414.2px;font-size:10px;line-height:10px;color:#8c8c8c;">40%</div>
<div class="t" style="left:-443.0px;width:800px;text-align:right;top:433.4px;font-size:10px;line-height:10px;color:#8c8c8c;">20%</div>
<div class="t" style="left:-443.0px;width:800px;text-align:right;top:452.6px;font-size:10px;line-height:10px;color:#8c8c8c;">0%</div>
<div class="t" style="left:1805.5px;top:368.6px;font-size:10px;line-height:10px;color:#8c8c8c;">60</div>
<div class="t" style="left:1805.5px;top:382.6px;font-size:10px;line-height:10px;color:#8c8c8c;">50</div>
<div class="t" style="left:1805.5px;top:396.6px;font-size:10px;line-height:10px;color:#8c8c8c;">40</div>
<div class="t" style="left:1805.5px;top:410.6px;font-size:10px;line-height:10px;color:#8c8c8c;">30</div>
<div class="t" style="left:1805.5px;top:424.6px;font-size:10px;line-height:10px;color:#8c8c8c;">20</div>
<div class="t" style="left:1805.5px;top:438.6px;font-size:10px;line-height:10px;color:#8c8c8c;">10</div>
<div class="t" style="left:1805.5px;top:452.6px;font-size:10px;line-height:10px;color:#8c8c8c;">0</div>
<div class="t" style="left:281px;top:403px;width:80px;height:12px;text-align:center;font-size:10px;line-height:12px;font-weight:700;color:#333;transform:rotate(-90deg)">Mean Quality (%)</div>
<div class="t" style="left:1785px;top:402.5px;width:100px;height:12px;text-align:center;font-size:10px;line-height:12px;font-weight:700;color:#333;transform:rotate(-90deg)">Hourly active users</div>
<div class="t" style="left:48.0px;width:800px;text-align:center;top:465.0px;font-size:10px;line-height:10px;color:#858585;">09 AM</div>
<div class="t" style="left:139.1px;width:800px;text-align:center;top:465.0px;font-size:10px;line-height:10px;color:#858585;">12 PM</div>
<div class="t" style="left:230.3px;width:800px;text-align:center;top:465.0px;font-size:10px;line-height:10px;color:#858585;">03 PM</div>
<div class="t" style="left:321.4px;width:800px;text-align:center;top:465.0px;font-size:10px;line-height:10px;color:#858585;">06 PM</div>
<div class="t" style="left:412.6px;width:800px;text-align:center;top:465.0px;font-size:10px;line-height:10px;color:#858585;">09 PM</div>
<div class="t" style="left:503.7px;width:800px;text-align:center;top:465.0px;font-size:10px;line-height:10px;color:#858585;">12 AM</div>
<div class="t" style="left:594.8px;width:800px;text-align:center;top:465.0px;font-size:10px;line-height:10px;color:#858585;">03 AM</div>
<div class="t" style="left:686.0px;width:800px;text-align:center;top:465.0px;font-size:10px;line-height:10px;color:#858585;">06 AM</div>
<div class="t" style="left:777.1px;width:800px;text-align:center;top:465.0px;font-size:10px;line-height:10px;color:#858585;">09 AM</div>
<div class="t" style="left:868.3px;width:800px;text-align:center;top:465.0px;font-size:10px;line-height:10px;color:#858585;">12 PM</div>
<div class="t" style="left:959.4px;width:800px;text-align:center;top:465.0px;font-size:10px;line-height:10px;color:#858585;">03 PM</div>
<div class="t" style="left:1050.5px;width:800px;text-align:center;top:465.0px;font-size:10px;line-height:10px;color:#858585;">06 PM</div>
<div class="t" style="left:1141.7px;width:800px;text-align:center;top:465.0px;font-size:10px;line-height:10px;color:#858585;">09 PM</div>
<div class="t" style="left:1232.8px;width:800px;text-align:center;top:465.0px;font-size:10px;line-height:10px;color:#858585;">12 AM</div>
<div class="t" style="left:1324.0px;width:800px;text-align:center;top:465.0px;font-size:10px;line-height:10px;color:#858585;">03 AM</div>
<div class="abs" style="left:366px;top:460px;width:10px;height:16px;overflow:hidden"><div class="t" style="left:-24px;top:5px;font-size:10px;line-height:10px;color:#777">06 AM</div></div>
<div class="t" style="left:139.3px;width:800px;text-align:center;top:475.8px;font-size:10px;line-height:10px;color:#bbb;">MAR 07</div>
<div class="t" style="left:867.5px;width:800px;text-align:center;top:475.8px;font-size:10px;line-height:10px;color:#bbb;">MAR 08</div>
<div class="abs" style="left:1436px;top:526px;width:84px;height:14.5px;background:#eceeef;border-radius:5px;"></div>
<div class="t" style="left:1078.0px;width:800px;text-align:center;top:528.0px;font-size:10px;line-height:10px;color:#555;">Evaluation start</div>
<div class="abs" style="left:1808px;top:526px;width:36px;height:14.5px;background:#eceeef;border-radius:5px;"></div>
<div class="t" style="left:1426.0px;width:800px;text-align:center;top:528.0px;font-size:10px;line-height:10px;color:#555;">Now</div>
<div class="abs" style="left:305px;top:571px;width:1278px;height:500px;background:#f7f8fa;border-radius:10px;"></div>
<div class="t" style="left:320.4px;top:598.2px;font-size:12px;line-height:12px;color:#4b4b4b;font-weight:700;">Quality improvement per Endpoint-Pair</div>
<div class="abs" style="left:1271.7px;top:587.6px;width:195.6px;height:34.2px;background:#fafbfc;border-radius:4px;box-shadow:0 0 0 1px #eceef0;"></div>
<div class="abs" style="left:1271.7px;top:587.6px;width:109.3px;height:34.2px;background:#9da5ad;border-radius:4px 0 0 4px;"></div>
<div class="t" style="left:1279.4px;top:598.2px;font-size:12px;line-height:12px;color:#fff;">Evaluation period</div>
<div class="t" style="left:1389.7px;top:598.2px;font-size:12px;line-height:12px;color:#444;">Since issued</div>
<div class="abs" style="left:1485.5px;top:587.6px;width:80.9px;height:34.2px;background:#fafbfc;border-radius:4px;box-shadow:0 0 0 1px #eceef0;"></div>
<div class="abs" style="left:1485.5px;top:587.6px;width:40.3px;height:34.2px;background:#9da5ad;border-radius:4px 0 0 4px;"></div>
<svg style="left:1497px;top:596.5px" width="18" height="18" viewBox="0 0 18 18">
<circle cx="9" cy="9" r="8" fill="#fff"/>
<path d="M9,9 L9,0.8 M9,9 L17.2,9 M9,9 L3.3,14.7" stroke="#a2a9b1" stroke-width="1.2"/>
</svg>
<svg style="left:1537px;top:598px" width="18" height="14" viewBox="0 0 18 14">
<rect x="3.5" y="4" width="1" height="6" fill="#555"/><rect x="13.5" y="4" width="1" height="6" fill="#555"/>
<rect x="1" y="1.5" width="16" height="5" rx="2.5" fill="#555"/>
<rect x="1" y="8.5" width="16" height="5" rx="2.5" fill="#555"/>
<circle cx="3.6" cy="4" r=".7" fill="#ddd"/><circle cx="5.6" cy="4" r=".7" fill="#ddd"/>
<circle cx="3.6" cy="11" r=".7" fill="#ddd"/><circle cx="5.6" cy="11" r=".7" fill="#ddd"/>
</svg>
<svg style="left:0;top:0" width="1940" height="1038" viewBox="0 0 1940 1038"><circle cx="944" cy="856.5" r="191" fill="#f4f6f8"/><path d="M833.01,1015.01 A193.5,193.5 0 0 1 944.00,663.00" fill="none" stroke="#eef0f3" stroke-width="10"/><path d="M947.38,663.03 A193.5,193.5 0 1 1 833.01,1015.01" fill="none" stroke="#c4c8cf" stroke-width="4.6"/><circle cx="944" cy="856.5" r="128" fill="none" stroke="#cfd3d8" stroke-width="1" stroke-dasharray="1.6,2.4"/><circle cx="944" cy="856.5" r="142.5" fill="none" stroke="#cfd3d8" stroke-width="1" stroke-dasharray="1.6,2.4"/><circle cx="944" cy="856.5" r="156.5" fill="none" stroke="#cfd3d8" stroke-width="1" stroke-dasharray="1.6,2.4"/><circle cx="944" cy="856.5" r="171" fill="none" stroke="#cfd3d8" stroke-width="1" stroke-dasharray="1.6,2.4"/><circle cx="944" cy="856.5" r="185.5" fill="none" stroke="#cfd3d8" stroke-width="1" stroke-dasharray="1.6,2.4"/><circle cx="944" cy="856.5" r="121" fill="#f5f6f8" stroke="none"/><path d="M944.00,736.00 A120.5,120.5 0 1 1 878.37,957.56" fill="none" stroke="#c9cdd3" stroke-width="4.5"/><path d="M878.37,957.56 A120.5,120.5 0 0 1 944.00,736.00" fill="none" stroke="#dfe2e6" stroke-width="4.5"/><circle cx="944" cy="856.5" r="117" fill="#f7f8fa"/><path d="M954.37,742.97 A114,114 0 1 1 887.90,955.74 Q881.08,951.56 885.49,944.89 L893.77,932.38 Q898.19,925.71 905.06,929.80 A83,83 0 1 0 953.72,774.07 Q945.74,773.52 945.91,765.52 L946.22,750.52 Q946.39,742.53 954.37,742.97 Z" fill="#6aa0de"/><path d="M866.95,940.52 A114,114 0 0 1 832.69,831.87 Q834.69,824.12 842.37,826.39 L858.67,831.22 Q866.34,833.49 864.45,841.26 A81,81 0 0 0 887.57,914.61 Q893.58,919.89 888.60,926.15 L878.01,939.46 Q873.03,945.72 866.95,940.52 Z" fill="#b6d0ed"/><path d="M842.06,807.75 A113,113 0 0 1 933.65,743.98 Q941.63,743.52 941.80,751.52 L942.18,769.52 Q942.35,777.52 934.37,778.09 A79,79 0 0 0 873.80,820.26 Q870.50,827.55 863.05,824.61 L846.31,818.02 Q838.86,815.09 842.06,807.75 Z" fill="#aedfc4"/><circle cx="944" cy="856.5" r="75.6" fill="#e3e5e9"/><circle cx="944" cy="856.5" r="43" fill="#eef0f2" stroke="#f6f7f9" stroke-width="1.5"/><line x1="1010.9" y1="877.0" x2="1020.5" y2="879.9" stroke="#c5c9ce" stroke-width="2"/><line x1="877.1" y1="877.0" x2="867.5" y2="879.9" stroke="#c5c9ce" stroke-width="2"/><line x1="902.9" y1="799.9" x2="897.0" y2="791.8" stroke="#c5c9ce" stroke-width="2"/><line x1="944" y1="663" x2="944" y2="786" stroke="#9a9a9a" stroke-width="1" stroke-dasharray="2,1.5"/><line x1="1061.4" y1="894.8" x2="1104" y2="908" stroke="#8a8a8a" stroke-width="1.2" stroke-dasharray="2,2"/><circle cx="1106.2" cy="908.6" r="8.2" fill="#35a38a"/><line x1="827.8" y1="894.8" x2="800" y2="903.5" stroke="#8a8a8a" stroke-width="1.2" stroke-dasharray="2,2"/><circle cx="797.9" cy="904.1" r="8" fill="#a3d6c4" opacity=".9"/><circle cx="871.5" cy="755.8" r="6.3" fill="#a8d9c6" opacity=".9"/></svg>
<div class="t" style="left:946.5px;top:666.4px;font-size:10px;line-height:10px;color:#888;">30%</div>
<div class="t" style="left:946.5px;top:681.0px;font-size:10px;line-height:10px;color:#888;">22%</div>
<div class="t" style="left:946.5px;top:695.1px;font-size:10px;line-height:10px;color:#888;">15%</div>
<div class="t" style="left:946.5px;top:709.3px;font-size:10px;line-height:10px;color:#888;">8%</div>
<div class="t" style="left:946.5px;top:723.6px;font-size:10px;line-height:10px;color:#888;">0%</div>
<div class="t" style="left:544.0px;width:800px;text-align:center;top:828.3px;font-size:18px;line-height:18px;color:#59616a;font-weight:700;">10</div>
<div class="t" style="left:544.0px;width:800px;text-align:center;top:851.3px;font-size:12px;line-height:12px;color:#69717a;">Users</div>
<div class="t" style="left:544.0px;width:800px;text-align:center;top:870.2px;font-size:10px;line-height:10px;color:#767d85;">SITE-D3F28..</div>
<div class="t" style="left:544.0px;width:800px;text-align:center;top:906.6px;font-size:10.3px;line-height:10.3px;color:#646b73;">HOST 195..</div>
<div class="t" style="left:995px;top:879px;width:80px;height:12px;text-align:center;font-size:10.5px;line-height:12px;color:#fff;transform:rotate(-71deg)">HOST 49208</div>
<div class="t" style="left:840.2px;top:726.7px;font-size:10px;line-height:10px;color:#bbb;">+0.93%</div>
<div class="t" style="left:754.0px;top:903.5px;font-size:10px;line-height:10px;color:#bbb;">+17.15%</div>
<div class="t" style="left:1112.0px;top:908.5px;font-size:10px;line-height:10px;color:#777;">+25.88</div>
<div class="abs" style="left:1141px;top:753px;width:261.5px;height:206.5px;background:#fff;border-radius:10px;box-shadow:0 3px 12px rgba(0,0,0,.13);z-index:2;"></div>
<div class="abs" style="left:0;top:0;z-index:3">
<div class="t" style="left:1161.3px;top:780.3px;font-size:14px;line-height:14px;color:#555;font-weight:700;">HOST 19555</div>
<div class="t" style="left:1161.3px;top:801.4px;font-size:10px;line-height:10px;color:#666;">SITE-D3F2838A3D</div>
<svg style="left:1267px;top:788px" width="11" height="15" viewBox="0 0 11 15"><path d="M2,1.5 L8,7.5 L2,13.5" fill="none" stroke="#777" stroke-width="1.3"/></svg>
<div class="t" style="left:1295.5px;top:780.3px;font-size:14px;line-height:14px;color:#555;font-weight:700;">HOST 49208</div>
<div class="t" style="left:1295.5px;top:801.4px;font-size:10px;line-height:10px;color:#666;">SITE-22E8CE929E</div>
<div class="abs" style="left:1158.2px;top:830.6px;width:156.5px;height:104.6px;background:#f7f8f9;border-radius:10px;"></div>
<div class="abs" style="left:1322px;top:830.6px;width:64.3px;height:104.6px;background:#f7f8f9;border-radius:10px;"></div>
<div class="t" style="left:836.5px;width:800px;text-align:center;top:844.0px;font-size:24px;line-height:24px;color:#2e9d86;">+25.88%</div>
<div class="t" style="left:836.5px;width:800px;text-align:center;top:881.8px;font-size:12px;line-height:12px;color:#555;">Projected improvement</div>
<div class="t" style="left:836.5px;width:800px;text-align:center;top:907.8px;font-size:12px;line-height:12px;color:#555;"><span style="color:#4a90d9;font-weight:700">60.14%</span> to <span style="color:#2e9d86;font-weight:700">86.02%</span></div>
<div class="t" style="left:954.0px;width:800px;text-align:center;top:844.0px;font-size:24px;line-height:24px;color:#555;">6</div>
<div class="t" style="left:954.0px;width:800px;text-align:center;top:877.8px;font-size:12px;line-height:12px;color:#555;">Users</div>
</div>
<div class="abs" style="left:1616.6px;top:570.6px;width:242.2px;height:291.8px;background:#f7f8fa;border-radius:10px;"></div>
<div class="t" style="left:1632.0px;top:598.2px;font-size:12px;line-height:12px;color:#4b4b4b;font-weight:700;">Site Endpoint-Pairs</div>
<svg style="left:1815px;top:596px" width="18" height="17" viewBox="0 0 18 17"><path d="M1,1.5 L16,1.5 L10.2,8.5 L10.2,15.5 L7.3,13.5 L7.3,8.5 Z" fill="#444" stroke="#444" stroke-width="1" stroke-linejoin="round"/></svg>
<svg style="left:1631px;top:633px" width="18" height="17" viewBox="0 0 18 17"><circle cx="7" cy="7" r="5.3" fill="none" stroke="#555" stroke-width="1.5"/><path d="M10.8,10.8 L15.8,15.6" stroke="#555" stroke-width="1.7"/></svg>
<div class="t" style="left:1662.3px;top:636.5px;font-size:12px;line-height:12px;color:#777;">Search</div>
<div class="abs" style="left:1616.6px;top:660px;width:242.2px;height:1px;background:#eceef0;"></div>
<svg style="left:1631px;top:678px" width="18" height="14" viewBox="0 0 18 14"><path d="M4,1 L14,1 C15.5,1 16.5,3 17,6 L1,6 C1.5,3 2.5,1 4,1 Z" fill="#444"/><rect x="1" y="7.3" width="16" height="5" rx="1.5" fill="#444"/><circle cx="4" cy="9.8" r="1" fill="#fff"/></svg>
<div class="t" style="left:1660.0px;top:679.6px;font-size:12px;line-height:12px;color:#777;">From <span style="color:#444;font-weight:700">HOST 19555</span></div>
<div class="abs" style="left:1616.6px;top:702.2px;width:242.2px;height:1px;background:#eceef0;"></div>
<div class="abs" style="left:1616.6px;top:712.9px;width:242.2px;height:41.8px;background:#dee1e5;border-radius:4px;"></div>
<div class="t" style="left:1636.0px;top:727.6px;font-size:12px;line-height:12px;color:#888;">To <span style="color:#555">HOST 49208</span></div>
<div class="t" style="left:1001.5px;width:800px;text-align:right;top:727.6px;font-size:12px;line-height:12px;color:#2e9d86;font-weight:700;">+25.88%</div>
<div class="t" style="left:1813.0px;top:727.6px;font-size:12px;line-height:12px;color:#555;">6</div>
<svg style="left:1824.6px;top:728.3px" width="14.5" height="10.9" viewBox="0 0 16 12">
<circle cx="4.6" cy="3.4" r="2.3" fill="#555"/><circle cx="11" cy="3" r="2.7" fill="#555"/>
<path d="M0.4,11.6 C0.6,9 2.3,7.4 4.8,7.4 C5.6,7.4 6.3,7.5 6.9,7.8 C6.1,8.8 5.7,10.1 5.6,11.6 Z" fill="#555"/>
<path d="M6.6,11.6 C6.8,8.9 8.6,7.1 11,7.1 C13.5,7.1 15.4,8.9 15.6,11.6 Z" fill="#555"/>
</svg>
<div class="t" style="left:1636.0px;top:773.9px;font-size:12px;line-height:12px;color:#888;">To <span style="color:#555">HOST 40101</span></div>
<div class="t" style="left:1001.5px;width:800px;text-align:right;top:773.9px;font-size:12px;line-height:12px;color:#2e9d86;font-weight:700;">+17.15%</div>
<div class="t" style="left:1813.0px;top:773.9px;font-size:12px;line-height:12px;color:#555;">2</div>
<svg style="left:1824.6px;top:774.6px" width="14.5" height="10.9" viewBox="0 0 16 12">
<circle cx="4.6" cy="3.4" r="2.3" fill="#555"/><circle cx="11" cy="3" r="2.7" fill="#555"/>
<path d="M0.4,11.6 C0.6,9 2.3,7.4 4.8,7.4 C5.6,7.4 6.3,7.5 6.9,7.8 C6.1,8.8 5.7,10.1 5.6,11.6 Z" fill="#555"/>
<path d="M6.6,11.6 C6.8,8.9 8.6,7.1 11,7.1 C13.5,7.1 15.4,8.9 15.6,11.6 Z" fill="#555"/>
</svg>
<div class="t" style="left:1636.0px;top:820.3px;font-size:12px;line-height:12px;color:#888;">To <span style="color:#555">HOST 20730</span></div>
<div class="t" style="left:1001.5px;width:800px;text-align:right;top:820.3px;font-size:12px;line-height:12px;color:#2e9d86;font-weight:700;">+0.93%</div>
<div class="t" style="left:1813.0px;top:820.3px;font-size:12px;line-height:12px;color:#555;">2</div>
<svg style="left:1824.6px;top:821.0px" width="14.5" height="10.9" viewBox="0 0 16 12">
<circle cx="4.6" cy="3.4" r="2.3" fill="#555"/><circle cx="11" cy="3" r="2.7" fill="#555"/>
<path d="M0.4,11.6 C0.6,9 2.3,7.4 4.8,7.4 C5.6,7.4 6.3,7.5 6.9,7.8 C6.1,8.8 5.7,10.1 5.6,11.6 Z" fill="#555"/>
<path d="M6.6,11.6 C6.8,8.9 8.6,7.1 11,7.1 C13.5,7.1 15.4,8.9 15.6,11.6 Z" fill="#555"/>
</svg>

</body></html>
